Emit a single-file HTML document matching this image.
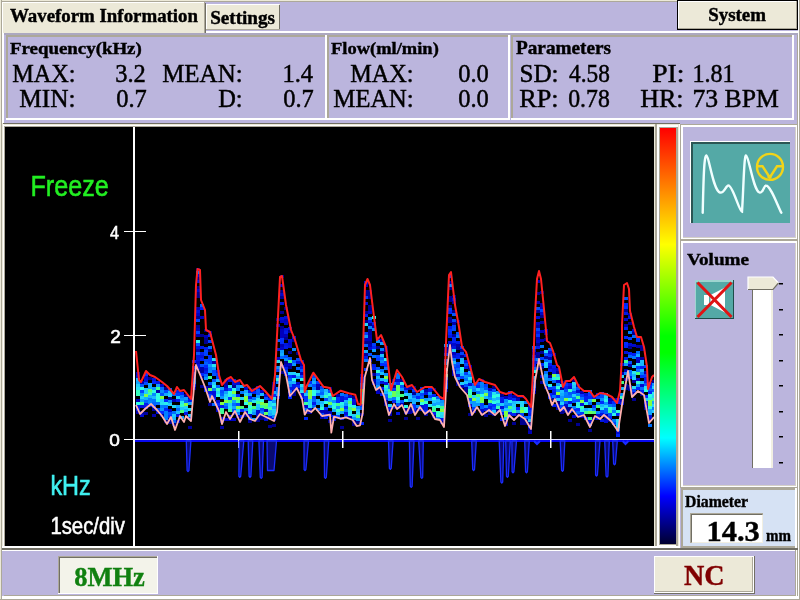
<!DOCTYPE html>
<html><head><meta charset="utf-8"><style>html,body{margin:0;padding:0;width:800px;height:600px;overflow:hidden;background:#BBB5DD}svg{display:block;will-change:transform}</style></head>
<body><svg width="800" height="600" viewBox="0 0 800 600"><rect x="0" y="0" width="800" height="600" fill="#BBB5DD"/><rect x="0" y="0" width="800" height="1" fill="#ECE9D8"/><rect x="0" y="1" width="800" height="1" fill="#ACA899"/><rect x="0" y="0" width="1" height="600" fill="#ECE9D8"/><rect x="1" y="0" width="1" height="600" fill="#ACA899"/><rect x="797" y="31" width="1" height="566" fill="#ACA899"/><rect x="798" y="0" width="1" height="600" fill="#FFFFFF"/><rect x="799" y="0" width="1" height="600" fill="#ACA899"/><rect x="0" y="599" width="800" height="1" fill="#ACA899"/><rect x="2" y="596" width="796" height="3" fill="#FFFFFF"/><rect x="4" y="595" width="793" height="1" fill="#ACA899"/><rect x="2" y="31" width="796" height="2" fill="#FFFFFF"/><rect x="2" y="33" width="796" height="2" fill="#ACA8C0"/><rect x="2" y="31" width="2" height="520" fill="#FFFFFF"/><rect x="2" y="2" width="203" height="31" fill="#ECE9D8"/><rect x="2" y="2" width="203" height="1" fill="#FFFFFF"/><rect x="2" y="2" width="1" height="31" fill="#FFFFFF"/><rect x="204" y="2" width="1" height="31" fill="#ACA899"/><rect x="205" y="3" width="1" height="30" fill="#716F64"/><rect x="206" y="4" width="74" height="26" fill="#ECE9D8"/><rect x="206" y="4" width="73" height="1" fill="#FFFFFF"/><rect x="206" y="4" width="1" height="26" fill="#FFFFFF"/><rect x="279" y="5" width="1" height="25" fill="#716F64"/><rect x="206" y="29" width="74" height="1" fill="#ACA899"/><rect x="677" y="0" width="121" height="30" fill="#000"/><rect x="678" y="1" width="119" height="28" fill="#FFFFFF"/><rect x="679" y="2" width="117" height="26" fill="#ECE9D8"/><rect x="796" y="1" width="1" height="28" fill="#ACA899"/><rect x="678" y="28" width="119" height="1" fill="#ACA899"/><rect x="6" y="35" width="321" height="85" fill="#BBB5DD"/><rect x="6" y="35" width="321" height="2" fill="#ACA899"/><rect x="6" y="35" width="2" height="85" fill="#ACA899"/><rect x="6" y="118" width="321" height="2" fill="#FFFFFF"/><rect x="325" y="35" width="2" height="85" fill="#FFFFFF"/><rect x="327" y="35" width="183" height="85" fill="#BBB5DD"/><rect x="327" y="35" width="183" height="2" fill="#ACA899"/><rect x="327" y="35" width="2" height="85" fill="#ACA899"/><rect x="327" y="118" width="183" height="2" fill="#FFFFFF"/><rect x="508" y="35" width="2" height="85" fill="#FFFFFF"/><rect x="511" y="35" width="283" height="85" fill="#BBB5DD"/><rect x="511" y="35" width="283" height="2" fill="#ACA899"/><rect x="511" y="35" width="2" height="85" fill="#ACA899"/><rect x="511" y="118" width="283" height="2" fill="#FFFFFF"/><rect x="792" y="35" width="2" height="85" fill="#FFFFFF"/><rect x="2" y="123" width="678" height="1" fill="#716F64"/><rect x="2" y="124" width="678" height="1" fill="#ECE9D8"/><rect x="3" y="125" width="677" height="1" fill="#FFFFFF"/><rect x="4" y="126" width="676" height="1" fill="#ACA899"/><rect x="2" y="123" width="1" height="425" fill="#ECE9D8"/><rect x="3" y="124" width="1" height="423" fill="#FFFFFF"/><rect x="4" y="126" width="1" height="420" fill="#ACA899"/><rect x="5" y="127" width="649" height="419" fill="#000"/><rect x="654" y="124" width="1" height="424" fill="#ECE9D8"/><rect x="655" y="124" width="2" height="424" fill="#ACA899"/><rect x="657" y="126" width="21" height="420" fill="#FFFFFF"/><rect x="657" y="126" width="19" height="1" fill="#FFFFFF"/><rect x="659" y="127" width="18" height="418" fill="#ACA899"/><defs><linearGradient id="cb" x1="0" y1="0" x2="0" y2="1"><stop offset="0" stop-color="#FF0000"/><stop offset="0.28" stop-color="#FFFF00"/><stop offset="0.50" stop-color="#00FF00"/><stop offset="0.54" stop-color="#00FF00"/><stop offset="0.745" stop-color="#00FFFF"/><stop offset="0.885" stop-color="#0000FF"/><stop offset="1" stop-color="#000030"/></linearGradient></defs><rect x="660" y="128" width="16" height="416" fill="url(#cb)"/><rect x="676" y="127" width="2" height="419" fill="#ACA899"/><rect x="678" y="124" width="1" height="424" fill="#ECE9D8"/><rect x="679" y="124" width="1" height="424" fill="#FFFFFF"/><rect x="2" y="546" width="678" height="2" fill="#FFFFFF"/><rect x="2" y="548" width="796" height="2" fill="#716F64"/><rect x="680" y="124" width="118" height="116" fill="#ACA899"/><rect x="681" y="125" width="116" height="114" fill="#FFFFFF"/><rect x="683" y="127" width="113" height="111" fill="#D4D0C8"/><rect x="683" y="127" width="112" height="110" fill="#BBB5DD"/><rect x="680" y="240" width="118" height="248" fill="#ACA899"/><rect x="681" y="241" width="116" height="246" fill="#FFFFFF"/><rect x="683" y="243" width="113" height="243" fill="#D4D0C8"/><rect x="683" y="243" width="112" height="242" fill="#BBB5DD"/><rect x="681" y="488" width="116" height="60" fill="#ACA899"/><rect x="683" y="490" width="113" height="56" fill="#D6E2F4"/><rect x="795" y="488" width="2" height="60" fill="#FFFFFF"/><rect x="690" y="141" width="100" height="82" fill="#FFFFFF"/><rect x="691" y="142" width="99" height="81" fill="#2B5654"/><rect x="693" y="144" width="97" height="79" fill="#54A9A6"/><path d="M702.7 212.7 C703.5 180 704 155 706.5 155.5 C709 156 713 190 720 192.5 C724 194 726 185 728.5 185.5 C733 186 739 211 742 211.7 C743.5 190 744 155 746 155.5 C749 156 753 190 759.5 192.5 C763 194 764 185 766 185.5 C771 186 778 207 781.3 212.7" fill="none" stroke="#F0FFFF" stroke-width="2.4" stroke-linecap="round"/><circle cx="770" cy="166.9" r="13" fill="none" stroke="#F2D418" stroke-width="2.4"/><path d="M757.5 166.3 L762.5 166.3 L769.8 177.5 L777 166.3 L783 166.3" fill="none" stroke="#F2D418" stroke-width="2.4"/><rect x="767.5" y="175.5" width="4" height="3" fill="#F2D418"/><rect x="695" y="280" width="39" height="39" fill="#1E4C4A"/><rect x="695" y="280" width="38" height="38" fill="#9ED4D0"/><rect x="696" y="282" width="37" height="36" fill="#54A9A6"/><path d="M704 295 L709 295 L709 305 L704 305 Z M710.5 295 L725 287.5 L725 312.5 L710.5 305 Z" fill="#FFFFFF"/><path d="M697.5 282.5 L731.5 317 M731.5 282.5 L697.5 317" stroke="#E01414" stroke-width="3"/><rect x="752" y="289" width="21" height="179" fill="#FFFFFF"/><rect x="752" y="289" width="1" height="179" fill="#716F64"/><rect x="771" y="289" width="2" height="179" fill="#F1EFE2"/><path d="M748 277 L773 277 L778.5 283 L773 290 L748 290 Z" fill="#ECE9D8"/><path d="M748 290 L748 277 L773 277 L778.5 283" fill="none" stroke="#FFFFFF" stroke-width="1.2"/><path d="M748 289.5 L773 289.5 L778.5 283" fill="none" stroke="#716F64" stroke-width="1.2"/><rect x="779" y="283" width="4" height="1.5" fill="#000"/><rect x="779" y="309" width="4" height="1.5" fill="#000"/><rect x="779" y="334" width="4" height="1.5" fill="#000"/><rect x="779" y="360" width="4" height="1.5" fill="#000"/><rect x="779" y="385" width="4" height="1.5" fill="#000"/><rect x="779" y="411" width="4" height="1.5" fill="#000"/><rect x="779" y="436" width="4" height="1.5" fill="#000"/><rect x="779" y="462" width="4" height="1.5" fill="#000"/><rect x="690" y="513" width="73" height="30" fill="#ACA899"/><rect x="691" y="514" width="71" height="28" fill="#716F64"/><rect x="692" y="515" width="71" height="28" fill="#F1EFE2"/><rect x="692" y="515" width="70" height="27" fill="#FFFFFF"/><rect x="4" y="550" width="792" height="1" fill="#FFFFFF"/><rect x="58" y="556" width="100" height="38" fill="#FFFFFF"/><rect x="58" y="556" width="99" height="37" fill="#ACA899"/><rect x="59" y="557" width="98" height="36" fill="#716F64"/><rect x="60" y="558" width="97" height="35" fill="#F3F3EA"/><rect x="654" y="556" width="101" height="38" fill="#716F64"/><rect x="654" y="556" width="100" height="37" fill="#FFFFFF"/><rect x="655" y="557" width="98" height="35" fill="#ACA899"/><rect x="655" y="557" width="97" height="34" fill="#ECE9D8"/><rect x="795" y="550" width="1" height="46" fill="#ACA899"/><rect x="796" y="550" width="1" height="47" fill="#FFFFFF"/><rect x="133" y="127" width="2" height="419" fill="#FFFFFF"/><rect x="124" y="231" width="22" height="1" fill="#FFFFFF"/><rect x="124" y="335" width="22" height="1" fill="#FFFFFF"/><rect x="124" y="439" width="22" height="1" fill="#FFFFFF"/><defs><clipPath id="gc"><rect x="135" y="127" width="519" height="419"/></clipPath></defs><g clip-path="url(#gc)"><g shape-rendering="crispEdges"><rect x="136" y="372" width="4" height="3" fill="#0005C7"/><rect x="136" y="375" width="4" height="3" fill="#0012DB"/><rect x="136" y="378" width="4" height="3" fill="#18B6FF"/><rect x="136" y="381" width="4" height="3" fill="#0EA0FF"/><rect x="136" y="384" width="4" height="3" fill="#21CCFC"/><rect x="136" y="387" width="4" height="3" fill="#26DFF4"/><rect x="136" y="390" width="4" height="3" fill="#36FFBE"/><rect x="136" y="393" width="4" height="3" fill="#36FFB9"/><rect x="136" y="399" width="4" height="3" fill="#0000B7"/><rect x="136" y="402" width="4" height="3" fill="#30FFE5"/><rect x="136" y="405" width="4" height="3" fill="#0016E3"/><rect x="136" y="408" width="4" height="3" fill="#001BEB"/><rect x="136" y="411" width="4" height="3" fill="#0000A4"/><rect x="140" y="381" width="4" height="3" fill="#0000B3"/><rect x="140" y="384" width="4" height="3" fill="#0059FF"/><rect x="140" y="387" width="4" height="3" fill="#30FFE3"/><rect x="140" y="390" width="4" height="3" fill="#0048FF"/><rect x="140" y="393" width="4" height="3" fill="#0B99FF"/><rect x="140" y="396" width="4" height="3" fill="#22D0FB"/><rect x="140" y="399" width="4" height="3" fill="#0D9EFF"/><rect x="140" y="402" width="4" height="3" fill="#3BFF9B"/><rect x="140" y="405" width="4" height="3" fill="#0012DB"/><rect x="140" y="411" width="4" height="3" fill="#000090"/><rect x="140" y="414" width="4" height="3" fill="#000ACE"/><rect x="144" y="373" width="4" height="3" fill="#0032FF"/><rect x="144" y="376" width="4" height="3" fill="#0009CD"/><rect x="144" y="379" width="4" height="3" fill="#000FD6"/><rect x="144" y="382" width="4" height="3" fill="#004DFF"/><rect x="144" y="388" width="4" height="3" fill="#20CAFE"/><rect x="144" y="391" width="4" height="3" fill="#21CCFD"/><rect x="144" y="394" width="4" height="3" fill="#80FF45"/><rect x="144" y="397" width="4" height="3" fill="#15B0FF"/><rect x="144" y="400" width="4" height="3" fill="#0069FF"/><rect x="144" y="403" width="4" height="3" fill="#001DED"/><rect x="144" y="406" width="4" height="3" fill="#0013DD"/><rect x="144" y="412" width="4" height="3" fill="#0000A2"/><rect x="148" y="377" width="4" height="3" fill="#000090"/><rect x="148" y="383" width="4" height="3" fill="#11A8FF"/><rect x="148" y="386" width="4" height="3" fill="#11A7FF"/><rect x="148" y="389" width="4" height="3" fill="#55FF6C"/><rect x="148" y="392" width="4" height="3" fill="#38FFB0"/><rect x="148" y="395" width="4" height="3" fill="#17B5FF"/><rect x="148" y="398" width="4" height="3" fill="#0080FF"/><rect x="148" y="401" width="4" height="3" fill="#0387FF"/><rect x="148" y="404" width="4" height="3" fill="#0013DD"/><rect x="152" y="378" width="4" height="3" fill="#0015E0"/><rect x="152" y="381" width="4" height="3" fill="#0025FB"/><rect x="152" y="387" width="4" height="3" fill="#0994FF"/><rect x="152" y="390" width="4" height="3" fill="#2DF7E9"/><rect x="152" y="393" width="4" height="3" fill="#048AFF"/><rect x="152" y="396" width="4" height="3" fill="#1BBEFF"/><rect x="152" y="399" width="4" height="3" fill="#0078FF"/><rect x="152" y="402" width="4" height="3" fill="#0065FF"/><rect x="152" y="405" width="4" height="3" fill="#002BFF"/><rect x="152" y="408" width="4" height="3" fill="#0000A5"/><rect x="152" y="414" width="4" height="3" fill="#0000AD"/><rect x="156" y="381" width="4" height="3" fill="#0016E2"/><rect x="156" y="384" width="4" height="3" fill="#0C9CFF"/><rect x="156" y="387" width="4" height="3" fill="#3EFF8A"/><rect x="156" y="390" width="4" height="3" fill="#0000A9"/><rect x="156" y="393" width="4" height="3" fill="#2FFEE6"/><rect x="156" y="396" width="4" height="3" fill="#2FFEE6"/><rect x="156" y="399" width="4" height="3" fill="#2EF8E9"/><rect x="156" y="402" width="4" height="3" fill="#0073FF"/><rect x="156" y="408" width="4" height="3" fill="#0046FF"/><rect x="156" y="411" width="4" height="3" fill="#0011DA"/><rect x="160" y="384" width="4" height="3" fill="#0006C8"/><rect x="160" y="387" width="4" height="3" fill="#006CFF"/><rect x="160" y="390" width="4" height="3" fill="#058BFF"/><rect x="160" y="393" width="4" height="3" fill="#0051FF"/><rect x="160" y="396" width="4" height="3" fill="#80FF45"/><rect x="160" y="399" width="4" height="3" fill="#23D4F9"/><rect x="160" y="402" width="4" height="3" fill="#27E2F3"/><rect x="160" y="405" width="4" height="3" fill="#007CFF"/><rect x="160" y="408" width="4" height="3" fill="#0A97FF"/><rect x="160" y="411" width="4" height="3" fill="#002AFF"/><rect x="160" y="414" width="4" height="3" fill="#000090"/><rect x="164" y="387" width="4" height="3" fill="#000090"/><rect x="164" y="390" width="4" height="3" fill="#0047FF"/><rect x="164" y="393" width="4" height="3" fill="#12A9FF"/><rect x="164" y="399" width="4" height="3" fill="#002AFF"/><rect x="164" y="402" width="4" height="3" fill="#2AEDED"/><rect x="164" y="405" width="4" height="3" fill="#0073FF"/><rect x="164" y="408" width="4" height="3" fill="#0025FB"/><rect x="164" y="411" width="4" height="3" fill="#007DFF"/><rect x="164" y="414" width="4" height="3" fill="#0183FF"/><rect x="164" y="417" width="4" height="3" fill="#0081FF"/><rect x="164" y="420" width="4" height="3" fill="#000090"/><rect x="168" y="388" width="4" height="3" fill="#0057FF"/><rect x="168" y="391" width="4" height="3" fill="#1BBEFF"/><rect x="168" y="394" width="4" height="3" fill="#22D0FB"/><rect x="168" y="397" width="4" height="3" fill="#000090"/><rect x="168" y="400" width="4" height="3" fill="#068EFF"/><rect x="168" y="403" width="4" height="3" fill="#22D1FA"/><rect x="168" y="409" width="4" height="3" fill="#0006C8"/><rect x="168" y="412" width="4" height="3" fill="#004AFF"/><rect x="168" y="415" width="4" height="3" fill="#002DFF"/><rect x="168" y="418" width="4" height="3" fill="#000090"/><rect x="168" y="421" width="4" height="3" fill="#000096"/><rect x="172" y="393" width="4" height="3" fill="#0062FF"/><rect x="172" y="399" width="4" height="3" fill="#0000B8"/><rect x="172" y="405" width="4" height="3" fill="#24D6F8"/><rect x="172" y="411" width="4" height="3" fill="#0070FF"/><rect x="172" y="414" width="4" height="3" fill="#20CAFD"/><rect x="172" y="417" width="4" height="3" fill="#18B6FF"/><rect x="172" y="420" width="4" height="3" fill="#0069FF"/><rect x="172" y="423" width="4" height="3" fill="#000090"/><rect x="176" y="390" width="4" height="3" fill="#0022F6"/><rect x="176" y="393" width="4" height="3" fill="#003CFF"/><rect x="176" y="396" width="4" height="3" fill="#20CAFD"/><rect x="176" y="399" width="4" height="3" fill="#001BE9"/><rect x="176" y="405" width="4" height="3" fill="#11A7FF"/><rect x="176" y="408" width="4" height="3" fill="#006DFF"/><rect x="176" y="411" width="4" height="3" fill="#1BBDFF"/><rect x="176" y="414" width="4" height="3" fill="#0018E5"/><rect x="176" y="420" width="4" height="3" fill="#0000B5"/><rect x="180" y="392" width="4" height="3" fill="#0028FF"/><rect x="180" y="395" width="4" height="3" fill="#0076FF"/><rect x="180" y="398" width="4" height="3" fill="#0893FF"/><rect x="180" y="401" width="4" height="3" fill="#2AEAEF"/><rect x="180" y="404" width="4" height="3" fill="#34FFC9"/><rect x="180" y="407" width="4" height="3" fill="#1EC5FF"/><rect x="180" y="410" width="4" height="3" fill="#3FFF83"/><rect x="180" y="416" width="4" height="3" fill="#0EA0FF"/><rect x="184" y="394" width="4" height="3" fill="#0000A2"/><rect x="184" y="397" width="4" height="3" fill="#0D9DFF"/><rect x="184" y="400" width="4" height="3" fill="#006FFF"/><rect x="184" y="403" width="4" height="3" fill="#80FF45"/><rect x="184" y="406" width="4" height="3" fill="#23D4F9"/><rect x="184" y="409" width="4" height="3" fill="#13ACFF"/><rect x="184" y="412" width="4" height="3" fill="#0019E7"/><rect x="188" y="396" width="4" height="3" fill="#0003C4"/><rect x="188" y="399" width="4" height="3" fill="#001CEC"/><rect x="188" y="402" width="4" height="3" fill="#10A4FF"/><rect x="188" y="408" width="4" height="3" fill="#27E0F3"/><rect x="188" y="414" width="4" height="3" fill="#1EC3FF"/><rect x="188" y="417" width="4" height="3" fill="#0025FA"/><rect x="188" y="426" width="4" height="3" fill="#00009E"/><rect x="192" y="360" width="4" height="3" fill="#0025FA"/><rect x="192" y="366" width="4" height="3" fill="#003AFF"/><rect x="192" y="369" width="4" height="3" fill="#00009E"/><rect x="192" y="372" width="4" height="3" fill="#0049FF"/><rect x="192" y="375" width="4" height="3" fill="#0053FF"/><rect x="192" y="378" width="4" height="3" fill="#0076FF"/><rect x="192" y="381" width="4" height="3" fill="#0489FF"/><rect x="192" y="384" width="4" height="3" fill="#001DED"/><rect x="192" y="387" width="4" height="3" fill="#000094"/><rect x="196" y="268" width="4" height="3" fill="#000090"/><rect x="196" y="271" width="4" height="3" fill="#007CFF"/><rect x="196" y="274" width="4" height="3" fill="#000BD0"/><rect x="196" y="277" width="4" height="3" fill="#000090"/><rect x="196" y="280" width="4" height="3" fill="#0014DF"/><rect x="196" y="286" width="4" height="3" fill="#000090"/><rect x="196" y="289" width="4" height="3" fill="#0007CA"/><rect x="196" y="292" width="4" height="3" fill="#000090"/><rect x="196" y="295" width="4" height="3" fill="#000090"/><rect x="196" y="307" width="4" height="3" fill="#0000B8"/><rect x="196" y="310" width="4" height="3" fill="#0010D9"/><rect x="196" y="313" width="4" height="3" fill="#0003C3"/><rect x="196" y="316" width="4" height="3" fill="#000090"/><rect x="196" y="319" width="4" height="3" fill="#0045FF"/><rect x="196" y="325" width="4" height="3" fill="#000090"/><rect x="196" y="328" width="4" height="3" fill="#0000B0"/><rect x="196" y="331" width="4" height="3" fill="#0042FF"/><rect x="196" y="334" width="4" height="3" fill="#0000B8"/><rect x="196" y="340" width="4" height="3" fill="#2CF3EB"/><rect x="196" y="343" width="4" height="3" fill="#0051FF"/><rect x="196" y="346" width="4" height="3" fill="#000FD7"/><rect x="196" y="349" width="4" height="3" fill="#0000AA"/><rect x="196" y="352" width="4" height="3" fill="#0053FF"/><rect x="196" y="355" width="4" height="3" fill="#0012DC"/><rect x="196" y="358" width="4" height="3" fill="#0014DE"/><rect x="196" y="361" width="4" height="3" fill="#0006C7"/><rect x="196" y="364" width="4" height="3" fill="#0012DC"/><rect x="196" y="367" width="4" height="3" fill="#000CD2"/><rect x="200" y="304" width="4" height="3" fill="#005DFF"/><rect x="200" y="307" width="4" height="3" fill="#001DED"/><rect x="200" y="316" width="4" height="3" fill="#0002C2"/><rect x="200" y="334" width="4" height="3" fill="#000090"/><rect x="200" y="346" width="4" height="3" fill="#0017E4"/><rect x="200" y="352" width="4" height="3" fill="#001FF1"/><rect x="200" y="355" width="4" height="3" fill="#0010D9"/><rect x="200" y="358" width="4" height="3" fill="#0021F4"/><rect x="200" y="364" width="4" height="3" fill="#0053FF"/><rect x="200" y="367" width="4" height="3" fill="#0000AD"/><rect x="200" y="370" width="4" height="3" fill="#00009D"/><rect x="200" y="373" width="4" height="3" fill="#0027FE"/><rect x="200" y="376" width="4" height="3" fill="#000090"/><rect x="200" y="385" width="4" height="3" fill="#000090"/><rect x="204" y="329" width="4" height="3" fill="#000090"/><rect x="204" y="335" width="4" height="3" fill="#0000BA"/><rect x="204" y="338" width="4" height="3" fill="#000090"/><rect x="204" y="341" width="4" height="3" fill="#000090"/><rect x="204" y="347" width="4" height="3" fill="#001FF1"/><rect x="204" y="350" width="4" height="3" fill="#0046FF"/><rect x="204" y="353" width="4" height="3" fill="#0042FF"/><rect x="204" y="359" width="4" height="3" fill="#0041FF"/><rect x="204" y="362" width="4" height="3" fill="#005DFF"/><rect x="204" y="365" width="4" height="3" fill="#0028FF"/><rect x="204" y="368" width="4" height="3" fill="#0011D9"/><rect x="204" y="371" width="4" height="3" fill="#001BEA"/><rect x="204" y="374" width="4" height="3" fill="#0066FF"/><rect x="204" y="377" width="4" height="3" fill="#0892FF"/><rect x="204" y="386" width="4" height="3" fill="#0000BA"/><rect x="204" y="389" width="4" height="3" fill="#0016E2"/><rect x="208" y="331" width="4" height="3" fill="#000090"/><rect x="208" y="334" width="4" height="3" fill="#0025FB"/><rect x="208" y="340" width="4" height="3" fill="#003DFF"/><rect x="208" y="346" width="4" height="3" fill="#006CFF"/><rect x="208" y="349" width="4" height="3" fill="#000099"/><rect x="208" y="355" width="4" height="3" fill="#002CFF"/><rect x="208" y="358" width="4" height="3" fill="#003AFF"/><rect x="208" y="361" width="4" height="3" fill="#003CFF"/><rect x="208" y="364" width="4" height="3" fill="#0C9CFF"/><rect x="208" y="367" width="4" height="3" fill="#007EFF"/><rect x="208" y="370" width="4" height="3" fill="#0489FF"/><rect x="208" y="376" width="4" height="3" fill="#3DFF8D"/><rect x="208" y="382" width="4" height="3" fill="#0056FF"/><rect x="208" y="385" width="4" height="3" fill="#000090"/><rect x="208" y="388" width="4" height="3" fill="#71FF52"/><rect x="208" y="391" width="4" height="3" fill="#0016E1"/><rect x="208" y="394" width="4" height="3" fill="#0041FF"/><rect x="208" y="397" width="4" height="3" fill="#0024F9"/><rect x="208" y="403" width="4" height="3" fill="#000090"/><rect x="212" y="358" width="4" height="3" fill="#26DFF4"/><rect x="212" y="361" width="4" height="3" fill="#0000A7"/><rect x="212" y="364" width="4" height="3" fill="#27E2F2"/><rect x="212" y="367" width="4" height="3" fill="#0996FF"/><rect x="212" y="370" width="4" height="3" fill="#0048FF"/><rect x="212" y="373" width="4" height="3" fill="#0053FF"/><rect x="212" y="379" width="4" height="3" fill="#005CFF"/><rect x="212" y="382" width="4" height="3" fill="#20CAFD"/><rect x="212" y="385" width="4" height="3" fill="#2CF4EA"/><rect x="212" y="388" width="4" height="3" fill="#007DFF"/><rect x="212" y="391" width="4" height="3" fill="#0011DA"/><rect x="212" y="394" width="4" height="3" fill="#0013DD"/><rect x="212" y="397" width="4" height="3" fill="#0025FA"/><rect x="212" y="403" width="4" height="3" fill="#0064FF"/><rect x="216" y="370" width="4" height="3" fill="#0015E0"/><rect x="216" y="373" width="4" height="3" fill="#0038FF"/><rect x="216" y="376" width="4" height="3" fill="#003EFF"/><rect x="216" y="379" width="4" height="3" fill="#19B8FF"/><rect x="216" y="385" width="4" height="3" fill="#0065FF"/><rect x="216" y="388" width="4" height="3" fill="#35FFC2"/><rect x="216" y="391" width="4" height="3" fill="#24D7F8"/><rect x="216" y="394" width="4" height="3" fill="#2EF9E8"/><rect x="216" y="400" width="4" height="3" fill="#000BD0"/><rect x="216" y="403" width="4" height="3" fill="#0027FE"/><rect x="216" y="406" width="4" height="3" fill="#0008CC"/><rect x="216" y="409" width="4" height="3" fill="#0006C9"/><rect x="220" y="387" width="4" height="3" fill="#0D9DFF"/><rect x="220" y="390" width="4" height="3" fill="#0050FF"/><rect x="220" y="393" width="4" height="3" fill="#0061FF"/><rect x="220" y="396" width="4" height="3" fill="#0892FF"/><rect x="220" y="402" width="4" height="3" fill="#80FF45"/><rect x="220" y="405" width="4" height="3" fill="#001DED"/><rect x="220" y="408" width="4" height="3" fill="#3BFF9B"/><rect x="220" y="411" width="4" height="3" fill="#3CFF93"/><rect x="220" y="417" width="4" height="3" fill="#000BD0"/><rect x="220" y="420" width="4" height="3" fill="#000090"/><rect x="220" y="426" width="4" height="3" fill="#00009B"/><rect x="224" y="379" width="4" height="3" fill="#000091"/><rect x="224" y="382" width="4" height="3" fill="#00009A"/><rect x="224" y="385" width="4" height="3" fill="#0000BB"/><rect x="224" y="388" width="4" height="3" fill="#0014DE"/><rect x="224" y="391" width="4" height="3" fill="#0FA2FF"/><rect x="224" y="394" width="4" height="3" fill="#21CEFC"/><rect x="224" y="397" width="4" height="3" fill="#27E0F3"/><rect x="224" y="400" width="4" height="3" fill="#80FF45"/><rect x="224" y="403" width="4" height="3" fill="#0080FF"/><rect x="224" y="406" width="4" height="3" fill="#0055FF"/><rect x="224" y="418" width="4" height="3" fill="#0006C9"/><rect x="228" y="379" width="4" height="3" fill="#000CD3"/><rect x="228" y="385" width="4" height="3" fill="#27E0F3"/><rect x="228" y="388" width="4" height="3" fill="#0045FF"/><rect x="228" y="391" width="4" height="3" fill="#30FFE4"/><rect x="228" y="394" width="4" height="3" fill="#2DF7E9"/><rect x="228" y="397" width="4" height="3" fill="#003EFF"/><rect x="228" y="400" width="4" height="3" fill="#43FF7C"/><rect x="228" y="403" width="4" height="3" fill="#23D3F9"/><rect x="228" y="406" width="4" height="3" fill="#27E0F3"/><rect x="228" y="409" width="4" height="3" fill="#3DFF91"/><rect x="228" y="415" width="4" height="3" fill="#0022F5"/><rect x="228" y="418" width="4" height="3" fill="#0002C2"/><rect x="232" y="379" width="4" height="3" fill="#001CEB"/><rect x="232" y="382" width="4" height="3" fill="#000FD7"/><rect x="232" y="385" width="4" height="3" fill="#000090"/><rect x="232" y="388" width="4" height="3" fill="#2EF9E8"/><rect x="232" y="391" width="4" height="3" fill="#80FF45"/><rect x="232" y="394" width="4" height="3" fill="#22D0FA"/><rect x="232" y="397" width="4" height="3" fill="#80FF45"/><rect x="232" y="400" width="4" height="3" fill="#0FA2FF"/><rect x="232" y="403" width="4" height="3" fill="#006CFF"/><rect x="232" y="406" width="4" height="3" fill="#11A6FF"/><rect x="232" y="409" width="4" height="3" fill="#0057FF"/><rect x="232" y="412" width="4" height="3" fill="#000091"/><rect x="232" y="418" width="4" height="3" fill="#0003C3"/><rect x="236" y="382" width="4" height="3" fill="#000ACE"/><rect x="236" y="385" width="4" height="3" fill="#0893FF"/><rect x="236" y="388" width="4" height="3" fill="#0081FF"/><rect x="236" y="394" width="4" height="3" fill="#0029FF"/><rect x="236" y="397" width="4" height="3" fill="#80FF45"/><rect x="236" y="400" width="4" height="3" fill="#3AFFA1"/><rect x="236" y="403" width="4" height="3" fill="#0042FF"/><rect x="236" y="406" width="4" height="3" fill="#80FF45"/><rect x="236" y="409" width="4" height="3" fill="#24D7F7"/><rect x="236" y="412" width="4" height="3" fill="#007CFF"/><rect x="236" y="415" width="4" height="3" fill="#0000AA"/><rect x="240" y="385" width="4" height="3" fill="#15AFFF"/><rect x="240" y="391" width="4" height="3" fill="#007AFF"/><rect x="240" y="397" width="4" height="3" fill="#24D8F7"/><rect x="240" y="406" width="4" height="3" fill="#47FF79"/><rect x="240" y="409" width="4" height="3" fill="#0026FC"/><rect x="240" y="415" width="4" height="3" fill="#0025FA"/><rect x="244" y="387" width="4" height="3" fill="#000ACE"/><rect x="244" y="390" width="4" height="3" fill="#13ACFF"/><rect x="244" y="393" width="4" height="3" fill="#21CEFC"/><rect x="244" y="396" width="4" height="3" fill="#80FF45"/><rect x="244" y="399" width="4" height="3" fill="#80FF45"/><rect x="244" y="402" width="4" height="3" fill="#2FFCE7"/><rect x="244" y="408" width="4" height="3" fill="#0D9DFF"/><rect x="244" y="411" width="4" height="3" fill="#000ACE"/><rect x="244" y="414" width="4" height="3" fill="#000090"/><rect x="248" y="390" width="4" height="3" fill="#0018E5"/><rect x="248" y="393" width="4" height="3" fill="#0B9AFF"/><rect x="248" y="396" width="4" height="3" fill="#0018E6"/><rect x="248" y="399" width="4" height="3" fill="#0995FF"/><rect x="248" y="402" width="4" height="3" fill="#72FF51"/><rect x="248" y="405" width="4" height="3" fill="#2FFEE6"/><rect x="248" y="408" width="4" height="3" fill="#37FFB6"/><rect x="248" y="411" width="4" height="3" fill="#2CF4EA"/><rect x="248" y="414" width="4" height="3" fill="#0007C9"/><rect x="248" y="417" width="4" height="3" fill="#0057FF"/><rect x="248" y="420" width="4" height="3" fill="#000090"/><rect x="252" y="388" width="4" height="3" fill="#000090"/><rect x="252" y="391" width="4" height="3" fill="#0022F6"/><rect x="252" y="397" width="4" height="3" fill="#006FFF"/><rect x="252" y="400" width="4" height="3" fill="#27E3F2"/><rect x="252" y="406" width="4" height="3" fill="#47FF78"/><rect x="252" y="409" width="4" height="3" fill="#17B3FF"/><rect x="252" y="412" width="4" height="3" fill="#0A96FF"/><rect x="252" y="418" width="4" height="3" fill="#0D9DFF"/><rect x="256" y="386" width="4" height="3" fill="#000FD6"/><rect x="256" y="389" width="4" height="3" fill="#0056FF"/><rect x="256" y="392" width="4" height="3" fill="#0052FF"/><rect x="256" y="395" width="4" height="3" fill="#0D9EFF"/><rect x="256" y="398" width="4" height="3" fill="#28E3F2"/><rect x="256" y="401" width="4" height="3" fill="#3CFF93"/><rect x="256" y="404" width="4" height="3" fill="#1FC7FF"/><rect x="256" y="407" width="4" height="3" fill="#1ABBFF"/><rect x="256" y="410" width="4" height="3" fill="#000CD2"/><rect x="256" y="413" width="4" height="3" fill="#000ACE"/><rect x="256" y="416" width="4" height="3" fill="#000090"/><rect x="256" y="419" width="4" height="3" fill="#000090"/><rect x="260" y="390" width="4" height="3" fill="#0005C6"/><rect x="260" y="393" width="4" height="3" fill="#17B5FF"/><rect x="260" y="399" width="4" height="3" fill="#31FFDA"/><rect x="260" y="402" width="4" height="3" fill="#80FF45"/><rect x="260" y="405" width="4" height="3" fill="#3BFF9B"/><rect x="260" y="408" width="4" height="3" fill="#004AFF"/><rect x="260" y="411" width="4" height="3" fill="#0073FF"/><rect x="260" y="414" width="4" height="3" fill="#000090"/><rect x="260" y="417" width="4" height="3" fill="#000090"/><rect x="264" y="394" width="4" height="3" fill="#000ED5"/><rect x="264" y="397" width="4" height="3" fill="#0050FF"/><rect x="264" y="403" width="4" height="3" fill="#6BFF58"/><rect x="264" y="406" width="4" height="3" fill="#48FF77"/><rect x="264" y="409" width="4" height="3" fill="#0000B3"/><rect x="264" y="412" width="4" height="3" fill="#63FF5F"/><rect x="264" y="415" width="4" height="3" fill="#000090"/><rect x="264" y="418" width="4" height="3" fill="#000CD2"/><rect x="268" y="395" width="4" height="3" fill="#0000A4"/><rect x="268" y="398" width="4" height="3" fill="#0026FD"/><rect x="268" y="401" width="4" height="3" fill="#23D4F9"/><rect x="268" y="404" width="4" height="3" fill="#24D6F8"/><rect x="268" y="407" width="4" height="3" fill="#39FFAA"/><rect x="268" y="410" width="4" height="3" fill="#19BAFF"/><rect x="268" y="413" width="4" height="3" fill="#13ACFF"/><rect x="268" y="416" width="4" height="3" fill="#0022F6"/><rect x="268" y="425" width="4" height="3" fill="#000090"/><rect x="272" y="382" width="4" height="3" fill="#000090"/><rect x="272" y="385" width="4" height="3" fill="#0000AC"/><rect x="272" y="388" width="4" height="3" fill="#0000B3"/><rect x="272" y="391" width="4" height="3" fill="#12A9FF"/><rect x="272" y="394" width="4" height="3" fill="#002DFF"/><rect x="272" y="397" width="4" height="3" fill="#27E2F3"/><rect x="272" y="400" width="4" height="3" fill="#0791FF"/><rect x="272" y="403" width="4" height="3" fill="#2AECEE"/><rect x="272" y="406" width="4" height="3" fill="#12A8FF"/><rect x="272" y="409" width="4" height="3" fill="#23D2FA"/><rect x="272" y="412" width="4" height="3" fill="#22CFFB"/><rect x="272" y="415" width="4" height="3" fill="#0387FF"/><rect x="272" y="418" width="4" height="3" fill="#0002C2"/><rect x="272" y="424" width="4" height="3" fill="#000090"/><rect x="276" y="318" width="4" height="3" fill="#000090"/><rect x="276" y="324" width="4" height="3" fill="#0003C4"/><rect x="276" y="339" width="4" height="3" fill="#005DFF"/><rect x="276" y="348" width="4" height="3" fill="#0018E5"/><rect x="276" y="357" width="4" height="3" fill="#0009CE"/><rect x="276" y="360" width="4" height="3" fill="#27E2F2"/><rect x="276" y="366" width="4" height="3" fill="#0791FF"/><rect x="276" y="369" width="4" height="3" fill="#004FFF"/><rect x="276" y="375" width="4" height="3" fill="#007FFF"/><rect x="276" y="378" width="4" height="3" fill="#2DF6EA"/><rect x="276" y="381" width="4" height="3" fill="#058CFF"/><rect x="276" y="387" width="4" height="3" fill="#007AFF"/><rect x="276" y="390" width="4" height="3" fill="#007AFF"/><rect x="276" y="393" width="4" height="3" fill="#0D9DFF"/><rect x="276" y="396" width="4" height="3" fill="#0000A0"/><rect x="280" y="275" width="4" height="3" fill="#000090"/><rect x="280" y="284" width="4" height="3" fill="#000ED6"/><rect x="280" y="290" width="4" height="3" fill="#000090"/><rect x="280" y="293" width="4" height="3" fill="#0009CC"/><rect x="280" y="296" width="4" height="3" fill="#000090"/><rect x="280" y="302" width="4" height="3" fill="#0012DC"/><rect x="280" y="311" width="4" height="3" fill="#000091"/><rect x="280" y="317" width="4" height="3" fill="#0010D8"/><rect x="280" y="320" width="4" height="3" fill="#0005C6"/><rect x="280" y="326" width="4" height="3" fill="#000090"/><rect x="280" y="329" width="4" height="3" fill="#0000BA"/><rect x="280" y="332" width="4" height="3" fill="#0000BD"/><rect x="280" y="335" width="4" height="3" fill="#0000BE"/><rect x="280" y="338" width="4" height="3" fill="#0033FF"/><rect x="280" y="341" width="4" height="3" fill="#002DFF"/><rect x="280" y="344" width="4" height="3" fill="#0000B6"/><rect x="280" y="347" width="4" height="3" fill="#0006C7"/><rect x="280" y="350" width="4" height="3" fill="#0C9CFF"/><rect x="280" y="353" width="4" height="3" fill="#13ACFF"/><rect x="280" y="356" width="4" height="3" fill="#0067FF"/><rect x="280" y="365" width="4" height="3" fill="#0009CD"/><rect x="280" y="371" width="4" height="3" fill="#000090"/><rect x="284" y="307" width="4" height="3" fill="#000090"/><rect x="284" y="316" width="4" height="3" fill="#000FD7"/><rect x="284" y="319" width="4" height="3" fill="#0000B9"/><rect x="284" y="322" width="4" height="3" fill="#0006C7"/><rect x="284" y="328" width="4" height="3" fill="#0013DE"/><rect x="284" y="331" width="4" height="3" fill="#001AE9"/><rect x="284" y="334" width="4" height="3" fill="#0000B9"/><rect x="284" y="337" width="4" height="3" fill="#000090"/><rect x="284" y="343" width="4" height="3" fill="#0016E1"/><rect x="284" y="346" width="4" height="3" fill="#001AE9"/><rect x="284" y="355" width="4" height="3" fill="#004DFF"/><rect x="284" y="358" width="4" height="3" fill="#058CFF"/><rect x="284" y="361" width="4" height="3" fill="#000098"/><rect x="284" y="364" width="4" height="3" fill="#0002C1"/><rect x="284" y="367" width="4" height="3" fill="#0020F2"/><rect x="284" y="370" width="4" height="3" fill="#0044FF"/><rect x="284" y="373" width="4" height="3" fill="#000FD6"/><rect x="288" y="327" width="4" height="3" fill="#0011DA"/><rect x="288" y="330" width="4" height="3" fill="#000090"/><rect x="288" y="339" width="4" height="3" fill="#000FD7"/><rect x="288" y="342" width="4" height="3" fill="#0009CD"/><rect x="288" y="345" width="4" height="3" fill="#0010D8"/><rect x="288" y="351" width="4" height="3" fill="#000090"/><rect x="288" y="357" width="4" height="3" fill="#0052FF"/><rect x="288" y="360" width="4" height="3" fill="#3DFF8F"/><rect x="288" y="363" width="4" height="3" fill="#0006C8"/><rect x="288" y="366" width="4" height="3" fill="#000090"/><rect x="288" y="372" width="4" height="3" fill="#22CFFB"/><rect x="288" y="375" width="4" height="3" fill="#002FFF"/><rect x="288" y="378" width="4" height="3" fill="#0062FF"/><rect x="288" y="381" width="4" height="3" fill="#12A9FF"/><rect x="288" y="384" width="4" height="3" fill="#007CFF"/><rect x="288" y="387" width="4" height="3" fill="#001AE9"/><rect x="288" y="390" width="4" height="3" fill="#0057FF"/><rect x="288" y="393" width="4" height="3" fill="#0000B0"/><rect x="288" y="396" width="4" height="3" fill="#0026FB"/><rect x="292" y="336" width="4" height="3" fill="#0015E1"/><rect x="292" y="339" width="4" height="3" fill="#000090"/><rect x="292" y="348" width="4" height="3" fill="#0387FF"/><rect x="292" y="360" width="4" height="3" fill="#005BFF"/><rect x="292" y="363" width="4" height="3" fill="#0995FF"/><rect x="292" y="372" width="4" height="3" fill="#22D0FB"/><rect x="292" y="375" width="4" height="3" fill="#0019E6"/><rect x="292" y="378" width="4" height="3" fill="#2EFAE7"/><rect x="292" y="381" width="4" height="3" fill="#17B4FF"/><rect x="292" y="384" width="4" height="3" fill="#001DEE"/><rect x="292" y="387" width="4" height="3" fill="#0016E2"/><rect x="292" y="390" width="4" height="3" fill="#000090"/><rect x="292" y="393" width="4" height="3" fill="#000090"/><rect x="296" y="352" width="4" height="3" fill="#000090"/><rect x="296" y="358" width="4" height="3" fill="#004AFF"/><rect x="296" y="361" width="4" height="3" fill="#000DD4"/><rect x="296" y="367" width="4" height="3" fill="#005EFF"/><rect x="296" y="373" width="4" height="3" fill="#27E0F3"/><rect x="296" y="376" width="4" height="3" fill="#0EA1FF"/><rect x="296" y="382" width="4" height="3" fill="#000BD1"/><rect x="296" y="385" width="4" height="3" fill="#0027FD"/><rect x="296" y="388" width="4" height="3" fill="#000090"/><rect x="300" y="360" width="4" height="3" fill="#0006C8"/><rect x="300" y="363" width="4" height="3" fill="#0000AF"/><rect x="300" y="366" width="4" height="3" fill="#0019E8"/><rect x="300" y="369" width="4" height="3" fill="#0053FF"/><rect x="300" y="372" width="4" height="3" fill="#0000B6"/><rect x="300" y="375" width="4" height="3" fill="#0042FF"/><rect x="300" y="378" width="4" height="3" fill="#2DF6E9"/><rect x="300" y="384" width="4" height="3" fill="#26E0F4"/><rect x="300" y="387" width="4" height="3" fill="#14ADFF"/><rect x="300" y="390" width="4" height="3" fill="#27E2F3"/><rect x="300" y="393" width="4" height="3" fill="#000ED5"/><rect x="300" y="396" width="4" height="3" fill="#0011DA"/><rect x="304" y="390" width="4" height="3" fill="#058BFF"/><rect x="304" y="393" width="4" height="3" fill="#1CBFFF"/><rect x="304" y="396" width="4" height="3" fill="#0033FF"/><rect x="304" y="399" width="4" height="3" fill="#003BFF"/><rect x="304" y="402" width="4" height="3" fill="#3AFFA3"/><rect x="304" y="405" width="4" height="3" fill="#0007CA"/><rect x="304" y="408" width="4" height="3" fill="#006AFF"/><rect x="304" y="411" width="4" height="3" fill="#000090"/><rect x="304" y="417" width="4" height="3" fill="#0025FB"/><rect x="308" y="381" width="4" height="3" fill="#002DFF"/><rect x="308" y="384" width="4" height="3" fill="#0388FF"/><rect x="308" y="390" width="4" height="3" fill="#80FF45"/><rect x="308" y="393" width="4" height="3" fill="#80FF45"/><rect x="308" y="396" width="4" height="3" fill="#80FF45"/><rect x="308" y="399" width="4" height="3" fill="#21CEFB"/><rect x="308" y="402" width="4" height="3" fill="#25DBF6"/><rect x="308" y="405" width="4" height="3" fill="#27E0F3"/><rect x="308" y="408" width="4" height="3" fill="#000CD3"/><rect x="308" y="411" width="4" height="3" fill="#00009D"/><rect x="312" y="375" width="4" height="3" fill="#0047FF"/><rect x="312" y="378" width="4" height="3" fill="#048BFF"/><rect x="312" y="381" width="4" height="3" fill="#14AEFF"/><rect x="312" y="384" width="4" height="3" fill="#004DFF"/><rect x="312" y="387" width="4" height="3" fill="#007CFF"/><rect x="312" y="390" width="4" height="3" fill="#2FFDE6"/><rect x="312" y="393" width="4" height="3" fill="#2FFEE6"/><rect x="312" y="396" width="4" height="3" fill="#003FFF"/><rect x="312" y="399" width="4" height="3" fill="#0067FF"/><rect x="312" y="402" width="4" height="3" fill="#001BEA"/><rect x="312" y="405" width="4" height="3" fill="#0068FF"/><rect x="316" y="381" width="4" height="3" fill="#003BFF"/><rect x="316" y="384" width="4" height="3" fill="#0002C1"/><rect x="316" y="387" width="4" height="3" fill="#0000A4"/><rect x="316" y="390" width="4" height="3" fill="#1FC6FF"/><rect x="316" y="393" width="4" height="3" fill="#0075FF"/><rect x="316" y="399" width="4" height="3" fill="#11A6FF"/><rect x="316" y="402" width="4" height="3" fill="#0B9AFF"/><rect x="316" y="408" width="4" height="3" fill="#0066FF"/><rect x="320" y="386" width="4" height="3" fill="#0049FF"/><rect x="320" y="389" width="4" height="3" fill="#007DFF"/><rect x="320" y="392" width="4" height="3" fill="#0061FF"/><rect x="320" y="395" width="4" height="3" fill="#17B4FF"/><rect x="320" y="401" width="4" height="3" fill="#18B6FF"/><rect x="320" y="404" width="4" height="3" fill="#22D0FB"/><rect x="320" y="407" width="4" height="3" fill="#33FFD1"/><rect x="320" y="410" width="4" height="3" fill="#0000BB"/><rect x="320" y="413" width="4" height="3" fill="#0040FF"/><rect x="320" y="416" width="4" height="3" fill="#0000A4"/><rect x="324" y="389" width="4" height="3" fill="#18B7FF"/><rect x="324" y="392" width="4" height="3" fill="#22D0FB"/><rect x="324" y="395" width="4" height="3" fill="#35FFC1"/><rect x="324" y="398" width="4" height="3" fill="#0048FF"/><rect x="324" y="401" width="4" height="3" fill="#2FFCE7"/><rect x="324" y="407" width="4" height="3" fill="#002FFF"/><rect x="324" y="410" width="4" height="3" fill="#0000B1"/><rect x="324" y="413" width="4" height="3" fill="#0000B9"/><rect x="324" y="416" width="4" height="3" fill="#001AE9"/><rect x="328" y="387" width="4" height="3" fill="#0000A1"/><rect x="328" y="390" width="4" height="3" fill="#004FFF"/><rect x="328" y="393" width="4" height="3" fill="#30FFDF"/><rect x="328" y="396" width="4" height="3" fill="#12AAFF"/><rect x="328" y="399" width="4" height="3" fill="#16B1FF"/><rect x="328" y="402" width="4" height="3" fill="#6EFF55"/><rect x="328" y="405" width="4" height="3" fill="#0EA0FF"/><rect x="328" y="411" width="4" height="3" fill="#0000B8"/><rect x="328" y="414" width="4" height="3" fill="#0012DB"/><rect x="328" y="420" width="4" height="3" fill="#000090"/><rect x="332" y="397" width="4" height="3" fill="#38FFAC"/><rect x="332" y="400" width="4" height="3" fill="#0A97FF"/><rect x="332" y="403" width="4" height="3" fill="#2CF4EA"/><rect x="332" y="406" width="4" height="3" fill="#32FFD6"/><rect x="332" y="409" width="4" height="3" fill="#12A8FF"/><rect x="332" y="415" width="4" height="3" fill="#001AE9"/><rect x="332" y="418" width="4" height="3" fill="#0014DE"/><rect x="336" y="394" width="4" height="3" fill="#0000B0"/><rect x="336" y="397" width="4" height="3" fill="#0030FF"/><rect x="336" y="400" width="4" height="3" fill="#002DFF"/><rect x="336" y="403" width="4" height="3" fill="#3EFF8C"/><rect x="336" y="406" width="4" height="3" fill="#0994FF"/><rect x="336" y="409" width="4" height="3" fill="#35FFC3"/><rect x="336" y="412" width="4" height="3" fill="#20C9FE"/><rect x="336" y="415" width="4" height="3" fill="#0043FF"/><rect x="340" y="393" width="4" height="3" fill="#0073FF"/><rect x="340" y="396" width="4" height="3" fill="#0013DE"/><rect x="340" y="399" width="4" height="3" fill="#0012DC"/><rect x="340" y="402" width="4" height="3" fill="#2DF5EA"/><rect x="340" y="405" width="4" height="3" fill="#26DEF4"/><rect x="340" y="408" width="4" height="3" fill="#80FF45"/><rect x="340" y="411" width="4" height="3" fill="#14AEFF"/><rect x="340" y="417" width="4" height="3" fill="#0019E7"/><rect x="340" y="426" width="4" height="3" fill="#000090"/><rect x="344" y="394" width="4" height="3" fill="#0053FF"/><rect x="344" y="397" width="4" height="3" fill="#0020F3"/><rect x="344" y="400" width="4" height="3" fill="#17B5FF"/><rect x="344" y="403" width="4" height="3" fill="#0A96FF"/><rect x="344" y="406" width="4" height="3" fill="#0034FF"/><rect x="344" y="409" width="4" height="3" fill="#0081FF"/><rect x="344" y="412" width="4" height="3" fill="#0012DB"/><rect x="344" y="415" width="4" height="3" fill="#002BFF"/><rect x="348" y="395" width="4" height="3" fill="#000BD0"/><rect x="348" y="398" width="4" height="3" fill="#26DDF5"/><rect x="348" y="401" width="4" height="3" fill="#46FF7A"/><rect x="348" y="404" width="4" height="3" fill="#2FFBE7"/><rect x="348" y="407" width="4" height="3" fill="#3FFF83"/><rect x="348" y="410" width="4" height="3" fill="#28E4F1"/><rect x="348" y="413" width="4" height="3" fill="#29E8F0"/><rect x="348" y="416" width="4" height="3" fill="#0000B1"/><rect x="352" y="396" width="4" height="3" fill="#000090"/><rect x="352" y="399" width="4" height="3" fill="#0014DF"/><rect x="352" y="402" width="4" height="3" fill="#000FD7"/><rect x="352" y="405" width="4" height="3" fill="#2DF5EA"/><rect x="352" y="408" width="4" height="3" fill="#80FF45"/><rect x="352" y="414" width="4" height="3" fill="#21CDFC"/><rect x="352" y="417" width="4" height="3" fill="#068FFF"/><rect x="352" y="420" width="4" height="3" fill="#000090"/><rect x="352" y="423" width="4" height="3" fill="#000090"/><rect x="356" y="406" width="4" height="3" fill="#0893FF"/><rect x="356" y="409" width="4" height="3" fill="#19B9FF"/><rect x="356" y="412" width="4" height="3" fill="#24D7F7"/><rect x="356" y="415" width="4" height="3" fill="#55FF6C"/><rect x="356" y="418" width="4" height="3" fill="#0893FF"/><rect x="356" y="421" width="4" height="3" fill="#000090"/><rect x="360" y="374" width="4" height="3" fill="#000090"/><rect x="360" y="377" width="4" height="3" fill="#0013DD"/><rect x="360" y="380" width="4" height="3" fill="#001FF1"/><rect x="360" y="383" width="4" height="3" fill="#0071FF"/><rect x="360" y="386" width="4" height="3" fill="#0070FF"/><rect x="360" y="389" width="4" height="3" fill="#57FF6A"/><rect x="360" y="392" width="4" height="3" fill="#26DCF5"/><rect x="360" y="395" width="4" height="3" fill="#2AEBEE"/><rect x="360" y="398" width="4" height="3" fill="#31FFDB"/><rect x="360" y="401" width="4" height="3" fill="#4EFF72"/><rect x="360" y="404" width="4" height="3" fill="#0038FF"/><rect x="360" y="407" width="4" height="3" fill="#0064FF"/><rect x="360" y="413" width="4" height="3" fill="#000090"/><rect x="360" y="422" width="4" height="3" fill="#0024F9"/><rect x="364" y="281" width="4" height="3" fill="#000ACF"/><rect x="364" y="284" width="4" height="3" fill="#0001C0"/><rect x="364" y="290" width="4" height="3" fill="#000098"/><rect x="364" y="293" width="4" height="3" fill="#000090"/><rect x="364" y="296" width="4" height="3" fill="#0037FF"/><rect x="364" y="302" width="4" height="3" fill="#0010D9"/><rect x="364" y="311" width="4" height="3" fill="#000090"/><rect x="364" y="314" width="4" height="3" fill="#001CEB"/><rect x="364" y="320" width="4" height="3" fill="#000090"/><rect x="364" y="323" width="4" height="3" fill="#24D6F8"/><rect x="364" y="332" width="4" height="3" fill="#003BFF"/><rect x="364" y="335" width="4" height="3" fill="#0D9EFF"/><rect x="364" y="338" width="4" height="3" fill="#0002C2"/><rect x="364" y="341" width="4" height="3" fill="#000090"/><rect x="364" y="344" width="4" height="3" fill="#0062FF"/><rect x="364" y="350" width="4" height="3" fill="#12A8FF"/><rect x="364" y="353" width="4" height="3" fill="#0000A1"/><rect x="364" y="356" width="4" height="3" fill="#001AE8"/><rect x="364" y="359" width="4" height="3" fill="#0076FF"/><rect x="364" y="368" width="4" height="3" fill="#003EFF"/><rect x="368" y="290" width="4" height="3" fill="#000090"/><rect x="368" y="293" width="4" height="3" fill="#000090"/><rect x="368" y="296" width="4" height="3" fill="#000099"/><rect x="368" y="305" width="4" height="3" fill="#000090"/><rect x="368" y="308" width="4" height="3" fill="#000090"/><rect x="368" y="311" width="4" height="3" fill="#0002C2"/><rect x="368" y="317" width="4" height="3" fill="#0082FF"/><rect x="368" y="320" width="4" height="3" fill="#001EEF"/><rect x="368" y="323" width="4" height="3" fill="#000090"/><rect x="368" y="326" width="4" height="3" fill="#0081FF"/><rect x="368" y="329" width="4" height="3" fill="#000090"/><rect x="368" y="332" width="4" height="3" fill="#00009C"/><rect x="368" y="335" width="4" height="3" fill="#0000B1"/><rect x="368" y="338" width="4" height="3" fill="#0000BE"/><rect x="368" y="341" width="4" height="3" fill="#000094"/><rect x="368" y="344" width="4" height="3" fill="#0000B1"/><rect x="368" y="347" width="4" height="3" fill="#000DD3"/><rect x="368" y="353" width="4" height="3" fill="#0052FF"/><rect x="368" y="359" width="4" height="3" fill="#000CD1"/><rect x="372" y="316" width="4" height="3" fill="#31FFDF"/><rect x="372" y="322" width="4" height="3" fill="#0020F2"/><rect x="372" y="325" width="4" height="3" fill="#0000BD"/><rect x="372" y="328" width="4" height="3" fill="#0388FF"/><rect x="372" y="343" width="4" height="3" fill="#003FFF"/><rect x="372" y="346" width="4" height="3" fill="#0023F7"/><rect x="372" y="349" width="4" height="3" fill="#0D9DFF"/><rect x="372" y="355" width="4" height="3" fill="#006BFF"/><rect x="372" y="364" width="4" height="3" fill="#0019E8"/><rect x="372" y="367" width="4" height="3" fill="#0021F5"/><rect x="372" y="373" width="4" height="3" fill="#0000A9"/><rect x="372" y="379" width="4" height="3" fill="#0000B9"/><rect x="372" y="382" width="4" height="3" fill="#0000A3"/><rect x="376" y="337" width="4" height="3" fill="#000CD3"/><rect x="376" y="340" width="4" height="3" fill="#068FFF"/><rect x="376" y="346" width="4" height="3" fill="#000090"/><rect x="376" y="355" width="4" height="3" fill="#0049FF"/><rect x="376" y="358" width="4" height="3" fill="#003AFF"/><rect x="376" y="367" width="4" height="3" fill="#0054FF"/><rect x="376" y="370" width="4" height="3" fill="#31FFD9"/><rect x="376" y="373" width="4" height="3" fill="#005EFF"/><rect x="376" y="376" width="4" height="3" fill="#17B4FF"/><rect x="376" y="379" width="4" height="3" fill="#006FFF"/><rect x="376" y="382" width="4" height="3" fill="#005EFF"/><rect x="376" y="385" width="4" height="3" fill="#0790FF"/><rect x="376" y="388" width="4" height="3" fill="#00009A"/><rect x="376" y="391" width="4" height="3" fill="#0001C1"/><rect x="380" y="339" width="4" height="3" fill="#0000B0"/><rect x="380" y="342" width="4" height="3" fill="#0EA0FF"/><rect x="380" y="348" width="4" height="3" fill="#007FFF"/><rect x="380" y="351" width="4" height="3" fill="#0000A1"/><rect x="380" y="354" width="4" height="3" fill="#1DC1FF"/><rect x="380" y="357" width="4" height="3" fill="#0063FF"/><rect x="380" y="360" width="4" height="3" fill="#0387FF"/><rect x="380" y="363" width="4" height="3" fill="#002BFF"/><rect x="380" y="369" width="4" height="3" fill="#0076FF"/><rect x="380" y="372" width="4" height="3" fill="#1BBDFF"/><rect x="380" y="378" width="4" height="3" fill="#19B8FF"/><rect x="380" y="381" width="4" height="3" fill="#0013DE"/><rect x="380" y="387" width="4" height="3" fill="#0016E2"/><rect x="380" y="393" width="4" height="3" fill="#0018E6"/><rect x="384" y="346" width="4" height="3" fill="#000090"/><rect x="384" y="349" width="4" height="3" fill="#000090"/><rect x="384" y="358" width="4" height="3" fill="#2DF7E9"/><rect x="384" y="361" width="4" height="3" fill="#0040FF"/><rect x="384" y="364" width="4" height="3" fill="#0028FF"/><rect x="384" y="367" width="4" height="3" fill="#006FFF"/><rect x="384" y="373" width="4" height="3" fill="#0790FF"/><rect x="384" y="376" width="4" height="3" fill="#80FF45"/><rect x="384" y="379" width="4" height="3" fill="#1BBEFF"/><rect x="384" y="382" width="4" height="3" fill="#0012DB"/><rect x="384" y="385" width="4" height="3" fill="#36FFBE"/><rect x="384" y="388" width="4" height="3" fill="#24D6F8"/><rect x="384" y="391" width="4" height="3" fill="#17B5FF"/><rect x="384" y="394" width="4" height="3" fill="#005DFF"/><rect x="384" y="397" width="4" height="3" fill="#0041FF"/><rect x="384" y="400" width="4" height="3" fill="#00009A"/><rect x="384" y="403" width="4" height="3" fill="#000092"/><rect x="388" y="383" width="4" height="3" fill="#0EA0FF"/><rect x="388" y="386" width="4" height="3" fill="#0388FF"/><rect x="388" y="389" width="4" height="3" fill="#3DFF90"/><rect x="388" y="392" width="4" height="3" fill="#2DF5EA"/><rect x="388" y="395" width="4" height="3" fill="#3AFFA3"/><rect x="388" y="398" width="4" height="3" fill="#0892FF"/><rect x="388" y="404" width="4" height="3" fill="#24D7F7"/><rect x="388" y="407" width="4" height="3" fill="#001CEC"/><rect x="388" y="410" width="4" height="3" fill="#0000BB"/><rect x="388" y="413" width="4" height="3" fill="#0000B2"/><rect x="388" y="419" width="4" height="3" fill="#000090"/><rect x="392" y="379" width="4" height="3" fill="#0001C0"/><rect x="392" y="382" width="4" height="3" fill="#006DFF"/><rect x="392" y="385" width="4" height="3" fill="#0000A9"/><rect x="392" y="388" width="4" height="3" fill="#0038FF"/><rect x="392" y="391" width="4" height="3" fill="#6AFF59"/><rect x="392" y="394" width="4" height="3" fill="#6BFF58"/><rect x="392" y="397" width="4" height="3" fill="#007EFF"/><rect x="392" y="400" width="4" height="3" fill="#001FF0"/><rect x="392" y="406" width="4" height="3" fill="#000090"/><rect x="396" y="373" width="4" height="3" fill="#0074FF"/><rect x="396" y="376" width="4" height="3" fill="#0076FF"/><rect x="396" y="379" width="4" height="3" fill="#0009CC"/><rect x="396" y="382" width="4" height="3" fill="#0030FF"/><rect x="396" y="385" width="4" height="3" fill="#68FF5A"/><rect x="396" y="388" width="4" height="3" fill="#69FF59"/><rect x="396" y="391" width="4" height="3" fill="#40FF7F"/><rect x="396" y="394" width="4" height="3" fill="#3DFF8F"/><rect x="396" y="397" width="4" height="3" fill="#30FFE3"/><rect x="396" y="400" width="4" height="3" fill="#1CBFFF"/><rect x="396" y="403" width="4" height="3" fill="#004AFF"/><rect x="396" y="406" width="4" height="3" fill="#0000AC"/><rect x="396" y="412" width="4" height="3" fill="#0015E0"/><rect x="400" y="379" width="4" height="3" fill="#000090"/><rect x="400" y="382" width="4" height="3" fill="#2BEEED"/><rect x="400" y="385" width="4" height="3" fill="#004FFF"/><rect x="400" y="388" width="4" height="3" fill="#0995FF"/><rect x="400" y="394" width="4" height="3" fill="#3FFF80"/><rect x="400" y="400" width="4" height="3" fill="#0051FF"/><rect x="400" y="403" width="4" height="3" fill="#0000B8"/><rect x="404" y="387" width="4" height="3" fill="#000DD4"/><rect x="404" y="390" width="4" height="3" fill="#004EFF"/><rect x="404" y="393" width="4" height="3" fill="#21CEFB"/><rect x="404" y="399" width="4" height="3" fill="#2AEAEF"/><rect x="404" y="405" width="4" height="3" fill="#30FFE5"/><rect x="404" y="408" width="4" height="3" fill="#000096"/><rect x="404" y="411" width="4" height="3" fill="#0000BA"/><rect x="404" y="417" width="4" height="3" fill="#000090"/><rect x="408" y="387" width="4" height="3" fill="#0000A7"/><rect x="408" y="393" width="4" height="3" fill="#1ABCFF"/><rect x="408" y="396" width="4" height="3" fill="#21CCFD"/><rect x="408" y="399" width="4" height="3" fill="#0A97FF"/><rect x="408" y="408" width="4" height="3" fill="#000090"/><rect x="408" y="411" width="4" height="3" fill="#0000A4"/><rect x="412" y="386" width="4" height="3" fill="#000092"/><rect x="412" y="389" width="4" height="3" fill="#0039FF"/><rect x="412" y="392" width="4" height="3" fill="#00009E"/><rect x="412" y="395" width="4" height="3" fill="#006EFF"/><rect x="412" y="398" width="4" height="3" fill="#16B2FF"/><rect x="412" y="401" width="4" height="3" fill="#17B4FF"/><rect x="412" y="404" width="4" height="3" fill="#0039FF"/><rect x="412" y="407" width="4" height="3" fill="#002EFF"/><rect x="412" y="410" width="4" height="3" fill="#000DD4"/><rect x="416" y="393" width="4" height="3" fill="#0079FF"/><rect x="416" y="396" width="4" height="3" fill="#0026FB"/><rect x="416" y="399" width="4" height="3" fill="#16B2FF"/><rect x="416" y="405" width="4" height="3" fill="#058DFF"/><rect x="416" y="408" width="4" height="3" fill="#0000AB"/><rect x="416" y="417" width="4" height="3" fill="#000090"/><rect x="420" y="387" width="4" height="3" fill="#0022F6"/><rect x="420" y="390" width="4" height="3" fill="#19B9FF"/><rect x="420" y="393" width="4" height="3" fill="#0047FF"/><rect x="420" y="396" width="4" height="3" fill="#0065FF"/><rect x="420" y="399" width="4" height="3" fill="#7FFF45"/><rect x="420" y="402" width="4" height="3" fill="#30FFE1"/><rect x="420" y="405" width="4" height="3" fill="#000FD7"/><rect x="420" y="408" width="4" height="3" fill="#000ACF"/><rect x="424" y="389" width="4" height="3" fill="#0000A3"/><rect x="424" y="392" width="4" height="3" fill="#0016E1"/><rect x="424" y="398" width="4" height="3" fill="#0C9CFF"/><rect x="424" y="401" width="4" height="3" fill="#35FFC4"/><rect x="424" y="404" width="4" height="3" fill="#0017E3"/><rect x="424" y="407" width="4" height="3" fill="#0019E7"/><rect x="424" y="410" width="4" height="3" fill="#0026FB"/><rect x="424" y="413" width="4" height="3" fill="#000090"/><rect x="428" y="386" width="4" height="3" fill="#002CFF"/><rect x="428" y="389" width="4" height="3" fill="#000DD3"/><rect x="428" y="392" width="4" height="3" fill="#0893FF"/><rect x="428" y="395" width="4" height="3" fill="#0048FF"/><rect x="428" y="398" width="4" height="3" fill="#12AAFF"/><rect x="428" y="404" width="4" height="3" fill="#2AECEE"/><rect x="428" y="410" width="4" height="3" fill="#000090"/><rect x="432" y="388" width="4" height="3" fill="#000090"/><rect x="432" y="394" width="4" height="3" fill="#0024F9"/><rect x="432" y="397" width="4" height="3" fill="#33FFCE"/><rect x="432" y="400" width="4" height="3" fill="#20C9FE"/><rect x="432" y="403" width="4" height="3" fill="#0D9EFF"/><rect x="432" y="406" width="4" height="3" fill="#38FFB2"/><rect x="432" y="409" width="4" height="3" fill="#3EFF86"/><rect x="432" y="412" width="4" height="3" fill="#001FF0"/><rect x="432" y="415" width="4" height="3" fill="#00009A"/><rect x="436" y="396" width="4" height="3" fill="#005BFF"/><rect x="436" y="399" width="4" height="3" fill="#1CBFFF"/><rect x="436" y="402" width="4" height="3" fill="#11A6FF"/><rect x="436" y="405" width="4" height="3" fill="#30FFE4"/><rect x="436" y="411" width="4" height="3" fill="#34FFC7"/><rect x="436" y="414" width="4" height="3" fill="#32FFD8"/><rect x="436" y="417" width="4" height="3" fill="#007EFF"/><rect x="440" y="397" width="4" height="3" fill="#0000B4"/><rect x="440" y="400" width="4" height="3" fill="#0995FF"/><rect x="440" y="403" width="4" height="3" fill="#11A7FF"/><rect x="440" y="406" width="4" height="3" fill="#3CFF96"/><rect x="440" y="409" width="4" height="3" fill="#80FF45"/><rect x="440" y="412" width="4" height="3" fill="#28E3F2"/><rect x="440" y="415" width="4" height="3" fill="#23D5F8"/><rect x="440" y="418" width="4" height="3" fill="#0019E8"/><rect x="440" y="421" width="4" height="3" fill="#0000A7"/><rect x="444" y="344" width="4" height="3" fill="#0A96FF"/><rect x="444" y="347" width="4" height="3" fill="#000090"/><rect x="444" y="350" width="4" height="3" fill="#0000AC"/><rect x="444" y="353" width="4" height="3" fill="#0036FF"/><rect x="444" y="359" width="4" height="3" fill="#0068FF"/><rect x="444" y="362" width="4" height="3" fill="#0995FF"/><rect x="444" y="368" width="4" height="3" fill="#2BEEED"/><rect x="444" y="374" width="4" height="3" fill="#3EFF8C"/><rect x="444" y="377" width="4" height="3" fill="#0080FF"/><rect x="444" y="380" width="4" height="3" fill="#0025FB"/><rect x="444" y="383" width="4" height="3" fill="#004AFF"/><rect x="444" y="386" width="4" height="3" fill="#0056FF"/><rect x="444" y="389" width="4" height="3" fill="#000090"/><rect x="448" y="275" width="4" height="3" fill="#003FFF"/><rect x="448" y="281" width="4" height="3" fill="#0000B2"/><rect x="448" y="284" width="4" height="3" fill="#068DFF"/><rect x="448" y="287" width="4" height="3" fill="#000090"/><rect x="448" y="296" width="4" height="3" fill="#000090"/><rect x="448" y="299" width="4" height="3" fill="#000090"/><rect x="448" y="305" width="4" height="3" fill="#000090"/><rect x="448" y="308" width="4" height="3" fill="#003CFF"/><rect x="448" y="311" width="4" height="3" fill="#0027FE"/><rect x="448" y="317" width="4" height="3" fill="#000090"/><rect x="448" y="320" width="4" height="3" fill="#0000A7"/><rect x="448" y="326" width="4" height="3" fill="#001AE8"/><rect x="448" y="329" width="4" height="3" fill="#0033FF"/><rect x="448" y="332" width="4" height="3" fill="#0027FE"/><rect x="448" y="335" width="4" height="3" fill="#001AE8"/><rect x="448" y="341" width="4" height="3" fill="#000ED6"/><rect x="448" y="344" width="4" height="3" fill="#0000A7"/><rect x="448" y="347" width="4" height="3" fill="#0007C9"/><rect x="448" y="350" width="4" height="3" fill="#000090"/><rect x="452" y="295" width="4" height="3" fill="#000090"/><rect x="452" y="298" width="4" height="3" fill="#0010D8"/><rect x="452" y="301" width="4" height="3" fill="#0000A4"/><rect x="452" y="310" width="4" height="3" fill="#000090"/><rect x="452" y="313" width="4" height="3" fill="#0058FF"/><rect x="452" y="319" width="4" height="3" fill="#0048FF"/><rect x="452" y="322" width="4" height="3" fill="#0000AB"/><rect x="452" y="325" width="4" height="3" fill="#0041FF"/><rect x="452" y="328" width="4" height="3" fill="#004AFF"/><rect x="452" y="334" width="4" height="3" fill="#0000A1"/><rect x="452" y="337" width="4" height="3" fill="#0023F8"/><rect x="452" y="340" width="4" height="3" fill="#0021F4"/><rect x="452" y="343" width="4" height="3" fill="#0008CC"/><rect x="452" y="346" width="4" height="3" fill="#0014DF"/><rect x="452" y="349" width="4" height="3" fill="#20C9FE"/><rect x="452" y="352" width="4" height="3" fill="#0001C0"/><rect x="452" y="355" width="4" height="3" fill="#0013DD"/><rect x="452" y="358" width="4" height="3" fill="#006FFF"/><rect x="452" y="361" width="4" height="3" fill="#1CBFFF"/><rect x="452" y="364" width="4" height="3" fill="#0060FF"/><rect x="452" y="367" width="4" height="3" fill="#003AFF"/><rect x="452" y="370" width="4" height="3" fill="#0001BF"/><rect x="452" y="373" width="4" height="3" fill="#0000AB"/><rect x="456" y="320" width="4" height="3" fill="#000090"/><rect x="456" y="332" width="4" height="3" fill="#0055FF"/><rect x="456" y="335" width="4" height="3" fill="#0072FF"/><rect x="456" y="341" width="4" height="3" fill="#001CEB"/><rect x="456" y="344" width="4" height="3" fill="#0000A6"/><rect x="456" y="347" width="4" height="3" fill="#000090"/><rect x="456" y="353" width="4" height="3" fill="#001AE9"/><rect x="456" y="356" width="4" height="3" fill="#0020F2"/><rect x="456" y="362" width="4" height="3" fill="#0054FF"/><rect x="456" y="365" width="4" height="3" fill="#003CFF"/><rect x="456" y="368" width="4" height="3" fill="#006BFF"/><rect x="456" y="371" width="4" height="3" fill="#068FFF"/><rect x="456" y="374" width="4" height="3" fill="#000DD3"/><rect x="456" y="377" width="4" height="3" fill="#0489FF"/><rect x="456" y="380" width="4" height="3" fill="#000090"/><rect x="456" y="383" width="4" height="3" fill="#000090"/><rect x="460" y="346" width="4" height="3" fill="#002EFF"/><rect x="460" y="349" width="4" height="3" fill="#000090"/><rect x="460" y="352" width="4" height="3" fill="#0045FF"/><rect x="460" y="355" width="4" height="3" fill="#000099"/><rect x="460" y="358" width="4" height="3" fill="#15AFFF"/><rect x="460" y="361" width="4" height="3" fill="#18B6FF"/><rect x="460" y="367" width="4" height="3" fill="#2FFBE7"/><rect x="460" y="370" width="4" height="3" fill="#26DDF5"/><rect x="460" y="373" width="4" height="3" fill="#1CC0FF"/><rect x="460" y="376" width="4" height="3" fill="#0043FF"/><rect x="460" y="382" width="4" height="3" fill="#20CBFD"/><rect x="460" y="385" width="4" height="3" fill="#0000B6"/><rect x="464" y="354" width="4" height="3" fill="#001EF0"/><rect x="464" y="360" width="4" height="3" fill="#0015E0"/><rect x="464" y="363" width="4" height="3" fill="#004EFF"/><rect x="464" y="366" width="4" height="3" fill="#001AE9"/><rect x="464" y="372" width="4" height="3" fill="#0045FF"/><rect x="464" y="375" width="4" height="3" fill="#0892FF"/><rect x="464" y="378" width="4" height="3" fill="#0075FF"/><rect x="464" y="381" width="4" height="3" fill="#1EC4FF"/><rect x="464" y="384" width="4" height="3" fill="#004EFF"/><rect x="464" y="387" width="4" height="3" fill="#0000A6"/><rect x="464" y="390" width="4" height="3" fill="#000090"/><rect x="468" y="365" width="4" height="3" fill="#0000BF"/><rect x="468" y="368" width="4" height="3" fill="#000090"/><rect x="468" y="371" width="4" height="3" fill="#15B0FF"/><rect x="468" y="374" width="4" height="3" fill="#007FFF"/><rect x="468" y="377" width="4" height="3" fill="#28E3F2"/><rect x="468" y="380" width="4" height="3" fill="#0FA1FF"/><rect x="468" y="383" width="4" height="3" fill="#0012DB"/><rect x="468" y="386" width="4" height="3" fill="#13ABFF"/><rect x="468" y="389" width="4" height="3" fill="#37FFB4"/><rect x="468" y="392" width="4" height="3" fill="#34FFCC"/><rect x="468" y="395" width="4" height="3" fill="#57FF6A"/><rect x="468" y="398" width="4" height="3" fill="#0043FF"/><rect x="468" y="401" width="4" height="3" fill="#0A98FF"/><rect x="468" y="404" width="4" height="3" fill="#0013DE"/><rect x="468" y="413" width="4" height="3" fill="#000095"/><rect x="472" y="383" width="4" height="3" fill="#0060FF"/><rect x="472" y="386" width="4" height="3" fill="#0790FF"/><rect x="472" y="389" width="4" height="3" fill="#007CFF"/><rect x="472" y="395" width="4" height="3" fill="#25DAF6"/><rect x="472" y="398" width="4" height="3" fill="#80FF45"/><rect x="472" y="401" width="4" height="3" fill="#0A98FF"/><rect x="472" y="404" width="4" height="3" fill="#0C9CFF"/><rect x="472" y="407" width="4" height="3" fill="#003EFF"/><rect x="472" y="410" width="4" height="3" fill="#0000BB"/><rect x="476" y="382" width="4" height="3" fill="#0041FF"/><rect x="476" y="385" width="4" height="3" fill="#0027FE"/><rect x="476" y="388" width="4" height="3" fill="#21CBFD"/><rect x="476" y="391" width="4" height="3" fill="#0070FF"/><rect x="476" y="394" width="4" height="3" fill="#49FF76"/><rect x="476" y="397" width="4" height="3" fill="#28E6F1"/><rect x="476" y="400" width="4" height="3" fill="#22CFFB"/><rect x="476" y="403" width="4" height="3" fill="#0A98FF"/><rect x="480" y="379" width="4" height="3" fill="#000090"/><rect x="480" y="382" width="4" height="3" fill="#0183FF"/><rect x="480" y="385" width="4" height="3" fill="#007BFF"/><rect x="480" y="388" width="4" height="3" fill="#0B99FF"/><rect x="480" y="391" width="4" height="3" fill="#0B9AFF"/><rect x="480" y="394" width="4" height="3" fill="#30FFE1"/><rect x="480" y="397" width="4" height="3" fill="#80FF45"/><rect x="480" y="400" width="4" height="3" fill="#6EFF55"/><rect x="480" y="403" width="4" height="3" fill="#0042FF"/><rect x="480" y="406" width="4" height="3" fill="#0054FF"/><rect x="480" y="409" width="4" height="3" fill="#0007C9"/><rect x="480" y="412" width="4" height="3" fill="#000090"/><rect x="484" y="384" width="4" height="3" fill="#003DFF"/><rect x="484" y="387" width="4" height="3" fill="#0056FF"/><rect x="484" y="390" width="4" height="3" fill="#17B5FF"/><rect x="484" y="393" width="4" height="3" fill="#80FF45"/><rect x="484" y="396" width="4" height="3" fill="#19B9FF"/><rect x="484" y="405" width="4" height="3" fill="#058BFF"/><rect x="484" y="408" width="4" height="3" fill="#0013DD"/><rect x="484" y="414" width="4" height="3" fill="#000090"/><rect x="488" y="388" width="4" height="3" fill="#000BD0"/><rect x="488" y="391" width="4" height="3" fill="#0067FF"/><rect x="488" y="394" width="4" height="3" fill="#0067FF"/><rect x="488" y="397" width="4" height="3" fill="#058BFF"/><rect x="488" y="400" width="4" height="3" fill="#46FF7A"/><rect x="488" y="403" width="4" height="3" fill="#0042FF"/><rect x="488" y="406" width="4" height="3" fill="#001EEE"/><rect x="488" y="409" width="4" height="3" fill="#003DFF"/><rect x="488" y="412" width="4" height="3" fill="#000090"/><rect x="492" y="386" width="4" height="3" fill="#000090"/><rect x="492" y="389" width="4" height="3" fill="#004CFF"/><rect x="492" y="392" width="4" height="3" fill="#27E1F3"/><rect x="492" y="395" width="4" height="3" fill="#32FFD6"/><rect x="492" y="398" width="4" height="3" fill="#1BBEFF"/><rect x="492" y="401" width="4" height="3" fill="#2FFCE6"/><rect x="492" y="404" width="4" height="3" fill="#0030FF"/><rect x="492" y="407" width="4" height="3" fill="#004CFF"/><rect x="492" y="410" width="4" height="3" fill="#1CC0FF"/><rect x="492" y="413" width="4" height="3" fill="#000090"/><rect x="496" y="391" width="4" height="3" fill="#0A96FF"/><rect x="496" y="394" width="4" height="3" fill="#2EFAE8"/><rect x="496" y="397" width="4" height="3" fill="#17B4FF"/><rect x="496" y="400" width="4" height="3" fill="#2BF0EC"/><rect x="496" y="403" width="4" height="3" fill="#13ACFF"/><rect x="496" y="406" width="4" height="3" fill="#36FFBA"/><rect x="496" y="409" width="4" height="3" fill="#000090"/><rect x="500" y="394" width="4" height="3" fill="#000090"/><rect x="500" y="397" width="4" height="3" fill="#001EEF"/><rect x="500" y="400" width="4" height="3" fill="#0016E3"/><rect x="500" y="403" width="4" height="3" fill="#20CBFD"/><rect x="500" y="406" width="4" height="3" fill="#0010D8"/><rect x="500" y="409" width="4" height="3" fill="#048AFF"/><rect x="500" y="412" width="4" height="3" fill="#0023F7"/><rect x="500" y="418" width="4" height="3" fill="#001FF1"/><rect x="504" y="396" width="4" height="3" fill="#0001BF"/><rect x="504" y="399" width="4" height="3" fill="#0387FF"/><rect x="504" y="402" width="4" height="3" fill="#0C9CFF"/><rect x="504" y="405" width="4" height="3" fill="#0078FF"/><rect x="504" y="408" width="4" height="3" fill="#20C9FE"/><rect x="504" y="411" width="4" height="3" fill="#80FF45"/><rect x="504" y="414" width="4" height="3" fill="#78FF4C"/><rect x="504" y="417" width="4" height="3" fill="#1BBDFF"/><rect x="504" y="420" width="4" height="3" fill="#000090"/><rect x="504" y="423" width="4" height="3" fill="#0004C4"/><rect x="508" y="391" width="4" height="3" fill="#0036FF"/><rect x="508" y="394" width="4" height="3" fill="#000CD1"/><rect x="508" y="397" width="4" height="3" fill="#001AE9"/><rect x="508" y="400" width="4" height="3" fill="#29E9EF"/><rect x="508" y="403" width="4" height="3" fill="#058DFF"/><rect x="508" y="406" width="4" height="3" fill="#3EFF8B"/><rect x="508" y="409" width="4" height="3" fill="#22CFFB"/><rect x="508" y="412" width="4" height="3" fill="#001EEE"/><rect x="508" y="415" width="4" height="3" fill="#000090"/><rect x="512" y="395" width="4" height="3" fill="#0000B6"/><rect x="512" y="398" width="4" height="3" fill="#002CFF"/><rect x="512" y="401" width="4" height="3" fill="#1CBFFF"/><rect x="512" y="404" width="4" height="3" fill="#22CFFB"/><rect x="512" y="407" width="4" height="3" fill="#26DDF5"/><rect x="512" y="410" width="4" height="3" fill="#3AFFA4"/><rect x="512" y="413" width="4" height="3" fill="#0021F4"/><rect x="512" y="422" width="4" height="3" fill="#000090"/><rect x="516" y="395" width="4" height="3" fill="#000090"/><rect x="516" y="398" width="4" height="3" fill="#0000BE"/><rect x="516" y="401" width="4" height="3" fill="#22CFFB"/><rect x="516" y="407" width="4" height="3" fill="#0024F9"/><rect x="516" y="410" width="4" height="3" fill="#13ABFF"/><rect x="516" y="413" width="4" height="3" fill="#000090"/><rect x="520" y="395" width="4" height="3" fill="#0000A9"/><rect x="520" y="401" width="4" height="3" fill="#24D8F7"/><rect x="520" y="404" width="4" height="3" fill="#23D3F9"/><rect x="520" y="407" width="4" height="3" fill="#3DFF90"/><rect x="520" y="410" width="4" height="3" fill="#80FF45"/><rect x="520" y="413" width="4" height="3" fill="#0040FF"/><rect x="520" y="416" width="4" height="3" fill="#000090"/><rect x="520" y="419" width="4" height="3" fill="#000090"/><rect x="520" y="422" width="4" height="3" fill="#000090"/><rect x="524" y="401" width="4" height="3" fill="#0081FF"/><rect x="524" y="407" width="4" height="3" fill="#30FFE4"/><rect x="524" y="410" width="4" height="3" fill="#31FFDB"/><rect x="524" y="416" width="4" height="3" fill="#0063FF"/><rect x="524" y="419" width="4" height="3" fill="#000090"/><rect x="524" y="422" width="4" height="3" fill="#000090"/><rect x="528" y="404" width="4" height="3" fill="#000ED5"/><rect x="528" y="407" width="4" height="3" fill="#001BEA"/><rect x="528" y="410" width="4" height="3" fill="#0032FF"/><rect x="528" y="413" width="4" height="3" fill="#0023F7"/><rect x="528" y="416" width="4" height="3" fill="#006DFF"/><rect x="528" y="419" width="4" height="3" fill="#1ABCFF"/><rect x="528" y="422" width="4" height="3" fill="#000090"/><rect x="528" y="425" width="4" height="3" fill="#0037FF"/><rect x="528" y="428" width="4" height="3" fill="#000090"/><rect x="528" y="431" width="4" height="3" fill="#0000B4"/><rect x="532" y="346" width="4" height="3" fill="#0052FF"/><rect x="532" y="349" width="4" height="3" fill="#000CD2"/><rect x="532" y="352" width="4" height="3" fill="#000090"/><rect x="532" y="355" width="4" height="3" fill="#0015E0"/><rect x="532" y="358" width="4" height="3" fill="#0045FF"/><rect x="532" y="361" width="4" height="3" fill="#0017E4"/><rect x="532" y="364" width="4" height="3" fill="#0022F5"/><rect x="532" y="367" width="4" height="3" fill="#0073FF"/><rect x="532" y="370" width="4" height="3" fill="#2EFAE7"/><rect x="532" y="376" width="4" height="3" fill="#1CC1FF"/><rect x="532" y="379" width="4" height="3" fill="#058BFF"/><rect x="532" y="382" width="4" height="3" fill="#0056FF"/><rect x="532" y="385" width="4" height="3" fill="#0066FF"/><rect x="532" y="388" width="4" height="3" fill="#001CEC"/><rect x="532" y="391" width="4" height="3" fill="#0000A8"/><rect x="536" y="280" width="4" height="3" fill="#0003C3"/><rect x="536" y="292" width="4" height="3" fill="#000090"/><rect x="536" y="301" width="4" height="3" fill="#0000B6"/><rect x="536" y="307" width="4" height="3" fill="#0050FF"/><rect x="536" y="310" width="4" height="3" fill="#000090"/><rect x="536" y="316" width="4" height="3" fill="#000ED5"/><rect x="536" y="322" width="4" height="3" fill="#0005C7"/><rect x="536" y="325" width="4" height="3" fill="#0000A5"/><rect x="536" y="328" width="4" height="3" fill="#0045FF"/><rect x="536" y="331" width="4" height="3" fill="#0017E4"/><rect x="536" y="334" width="4" height="3" fill="#0031FF"/><rect x="536" y="337" width="4" height="3" fill="#0000B7"/><rect x="536" y="340" width="4" height="3" fill="#0008CB"/><rect x="536" y="343" width="4" height="3" fill="#000090"/><rect x="536" y="346" width="4" height="3" fill="#001AE8"/><rect x="536" y="352" width="4" height="3" fill="#0000A8"/><rect x="536" y="355" width="4" height="3" fill="#000090"/><rect x="536" y="358" width="4" height="3" fill="#0080FF"/><rect x="536" y="361" width="4" height="3" fill="#0018E5"/><rect x="536" y="367" width="4" height="3" fill="#000090"/><rect x="540" y="291" width="4" height="3" fill="#000090"/><rect x="540" y="303" width="4" height="3" fill="#0000A7"/><rect x="540" y="306" width="4" height="3" fill="#0001C0"/><rect x="540" y="309" width="4" height="3" fill="#0041FF"/><rect x="540" y="312" width="4" height="3" fill="#0008CB"/><rect x="540" y="315" width="4" height="3" fill="#000090"/><rect x="540" y="321" width="4" height="3" fill="#00009E"/><rect x="540" y="330" width="4" height="3" fill="#0000B4"/><rect x="540" y="339" width="4" height="3" fill="#0000B0"/><rect x="540" y="345" width="4" height="3" fill="#0073FF"/><rect x="540" y="351" width="4" height="3" fill="#000099"/><rect x="540" y="357" width="4" height="3" fill="#003DFF"/><rect x="540" y="363" width="4" height="3" fill="#0027FE"/><rect x="540" y="366" width="4" height="3" fill="#000090"/><rect x="540" y="375" width="4" height="3" fill="#0000B5"/><rect x="540" y="381" width="4" height="3" fill="#000096"/><rect x="544" y="329" width="4" height="3" fill="#0003C3"/><rect x="544" y="332" width="4" height="3" fill="#0000A4"/><rect x="544" y="338" width="4" height="3" fill="#000090"/><rect x="544" y="350" width="4" height="3" fill="#24D7F7"/><rect x="544" y="353" width="4" height="3" fill="#0053FF"/><rect x="544" y="356" width="4" height="3" fill="#0000A4"/><rect x="544" y="359" width="4" height="3" fill="#005FFF"/><rect x="544" y="362" width="4" height="3" fill="#22D1FA"/><rect x="544" y="365" width="4" height="3" fill="#21CDFC"/><rect x="544" y="371" width="4" height="3" fill="#006DFF"/><rect x="544" y="374" width="4" height="3" fill="#12A9FF"/><rect x="544" y="377" width="4" height="3" fill="#0A98FF"/><rect x="544" y="380" width="4" height="3" fill="#0386FF"/><rect x="544" y="383" width="4" height="3" fill="#0081FF"/><rect x="544" y="386" width="4" height="3" fill="#000091"/><rect x="548" y="348" width="4" height="3" fill="#0043FF"/><rect x="548" y="351" width="4" height="3" fill="#000FD7"/><rect x="548" y="354" width="4" height="3" fill="#002AFF"/><rect x="548" y="357" width="4" height="3" fill="#0000A9"/><rect x="548" y="360" width="4" height="3" fill="#007DFF"/><rect x="548" y="363" width="4" height="3" fill="#001FF1"/><rect x="548" y="366" width="4" height="3" fill="#0008CB"/><rect x="548" y="369" width="4" height="3" fill="#001FF1"/><rect x="548" y="375" width="4" height="3" fill="#000098"/><rect x="548" y="378" width="4" height="3" fill="#0183FF"/><rect x="548" y="384" width="4" height="3" fill="#2BEFEC"/><rect x="548" y="387" width="4" height="3" fill="#003CFF"/><rect x="548" y="393" width="4" height="3" fill="#0026FC"/><rect x="548" y="396" width="4" height="3" fill="#0025FA"/><rect x="552" y="353" width="4" height="3" fill="#0000AC"/><rect x="552" y="365" width="4" height="3" fill="#001BEB"/><rect x="552" y="368" width="4" height="3" fill="#0013DD"/><rect x="552" y="371" width="4" height="3" fill="#0016E3"/><rect x="552" y="374" width="4" height="3" fill="#80FF45"/><rect x="552" y="377" width="4" height="3" fill="#2CF1EC"/><rect x="552" y="380" width="4" height="3" fill="#005EFF"/><rect x="552" y="386" width="4" height="3" fill="#004AFF"/><rect x="552" y="389" width="4" height="3" fill="#0024F9"/><rect x="552" y="392" width="4" height="3" fill="#0016E2"/><rect x="552" y="395" width="4" height="3" fill="#0070FF"/><rect x="552" y="398" width="4" height="3" fill="#0000A5"/><rect x="552" y="404" width="4" height="3" fill="#001CEC"/><rect x="556" y="368" width="4" height="3" fill="#0006C8"/><rect x="556" y="371" width="4" height="3" fill="#000097"/><rect x="556" y="374" width="4" height="3" fill="#21CEFC"/><rect x="556" y="377" width="4" height="3" fill="#36FFB9"/><rect x="556" y="380" width="4" height="3" fill="#0006C8"/><rect x="556" y="383" width="4" height="3" fill="#0C9BFF"/><rect x="556" y="386" width="4" height="3" fill="#32FFD8"/><rect x="556" y="389" width="4" height="3" fill="#0285FF"/><rect x="556" y="392" width="4" height="3" fill="#80FF45"/><rect x="556" y="395" width="4" height="3" fill="#0027FE"/><rect x="556" y="398" width="4" height="3" fill="#1EC5FF"/><rect x="556" y="401" width="4" height="3" fill="#000090"/><rect x="556" y="404" width="4" height="3" fill="#0008CB"/><rect x="556" y="407" width="4" height="3" fill="#0000B4"/><rect x="560" y="381" width="4" height="3" fill="#000090"/><rect x="560" y="384" width="4" height="3" fill="#28E5F1"/><rect x="560" y="387" width="4" height="3" fill="#0000A4"/><rect x="560" y="390" width="4" height="3" fill="#1BBEFF"/><rect x="560" y="393" width="4" height="3" fill="#13ABFF"/><rect x="560" y="396" width="4" height="3" fill="#0892FF"/><rect x="560" y="399" width="4" height="3" fill="#0A98FF"/><rect x="560" y="402" width="4" height="3" fill="#21CEFC"/><rect x="560" y="405" width="4" height="3" fill="#0045FF"/><rect x="560" y="408" width="4" height="3" fill="#001BEA"/><rect x="560" y="411" width="4" height="3" fill="#000090"/><rect x="564" y="380" width="4" height="3" fill="#000090"/><rect x="564" y="383" width="4" height="3" fill="#0033FF"/><rect x="564" y="386" width="4" height="3" fill="#001FF1"/><rect x="564" y="389" width="4" height="3" fill="#0046FF"/><rect x="564" y="392" width="4" height="3" fill="#0081FF"/><rect x="564" y="395" width="4" height="3" fill="#0076FF"/><rect x="564" y="398" width="4" height="3" fill="#7DFF47"/><rect x="564" y="401" width="4" height="3" fill="#0056FF"/><rect x="564" y="404" width="4" height="3" fill="#0009CD"/><rect x="564" y="407" width="4" height="3" fill="#000090"/><rect x="564" y="410" width="4" height="3" fill="#000090"/><rect x="568" y="383" width="4" height="3" fill="#001BEA"/><rect x="568" y="386" width="4" height="3" fill="#000ACF"/><rect x="568" y="389" width="4" height="3" fill="#35FFC5"/><rect x="568" y="392" width="4" height="3" fill="#0058FF"/><rect x="568" y="395" width="4" height="3" fill="#0070FF"/><rect x="568" y="398" width="4" height="3" fill="#30FFE1"/><rect x="568" y="401" width="4" height="3" fill="#0015E1"/><rect x="568" y="404" width="4" height="3" fill="#17B3FF"/><rect x="568" y="407" width="4" height="3" fill="#000090"/><rect x="568" y="410" width="4" height="3" fill="#0002C1"/><rect x="568" y="419" width="4" height="3" fill="#000090"/><rect x="572" y="379" width="4" height="3" fill="#000090"/><rect x="572" y="382" width="4" height="3" fill="#24D8F7"/><rect x="572" y="385" width="4" height="3" fill="#1EC5FF"/><rect x="572" y="388" width="4" height="3" fill="#12AAFF"/><rect x="572" y="391" width="4" height="3" fill="#004AFF"/><rect x="572" y="394" width="4" height="3" fill="#20CAFE"/><rect x="572" y="397" width="4" height="3" fill="#0078FF"/><rect x="572" y="400" width="4" height="3" fill="#0055FF"/><rect x="572" y="406" width="4" height="3" fill="#007DFF"/><rect x="572" y="409" width="4" height="3" fill="#0024F9"/><rect x="572" y="415" width="4" height="3" fill="#0005C6"/><rect x="576" y="384" width="4" height="3" fill="#0000B3"/><rect x="576" y="387" width="4" height="3" fill="#0052FF"/><rect x="576" y="390" width="4" height="3" fill="#0008CB"/><rect x="576" y="393" width="4" height="3" fill="#007EFF"/><rect x="576" y="396" width="4" height="3" fill="#3CFF95"/><rect x="576" y="399" width="4" height="3" fill="#0051FF"/><rect x="576" y="402" width="4" height="3" fill="#2CF1EC"/><rect x="576" y="405" width="4" height="3" fill="#2EF9E8"/><rect x="576" y="408" width="4" height="3" fill="#002EFF"/><rect x="576" y="411" width="4" height="3" fill="#0068FF"/><rect x="576" y="414" width="4" height="3" fill="#001AE9"/><rect x="576" y="423" width="4" height="3" fill="#000090"/><rect x="580" y="391" width="4" height="3" fill="#0000B4"/><rect x="580" y="394" width="4" height="3" fill="#0036FF"/><rect x="580" y="397" width="4" height="3" fill="#0078FF"/><rect x="580" y="400" width="4" height="3" fill="#80FF45"/><rect x="580" y="403" width="4" height="3" fill="#0018E5"/><rect x="580" y="406" width="4" height="3" fill="#35FFC1"/><rect x="580" y="409" width="4" height="3" fill="#29E7F0"/><rect x="580" y="412" width="4" height="3" fill="#0039FF"/><rect x="580" y="415" width="4" height="3" fill="#0000A3"/><rect x="584" y="393" width="4" height="3" fill="#0012DC"/><rect x="584" y="396" width="4" height="3" fill="#001FF0"/><rect x="584" y="399" width="4" height="3" fill="#001FF0"/><rect x="584" y="402" width="4" height="3" fill="#2AEAEF"/><rect x="584" y="408" width="4" height="3" fill="#15B1FF"/><rect x="584" y="411" width="4" height="3" fill="#3DFF8F"/><rect x="584" y="417" width="4" height="3" fill="#0042FF"/><rect x="588" y="390" width="4" height="3" fill="#006EFF"/><rect x="588" y="393" width="4" height="3" fill="#0039FF"/><rect x="588" y="396" width="4" height="3" fill="#0025FB"/><rect x="588" y="399" width="4" height="3" fill="#19B9FF"/><rect x="588" y="402" width="4" height="3" fill="#006BFF"/><rect x="588" y="408" width="4" height="3" fill="#21CCFC"/><rect x="588" y="411" width="4" height="3" fill="#66FF5C"/><rect x="588" y="417" width="4" height="3" fill="#3EFF87"/><rect x="588" y="420" width="4" height="3" fill="#000FD6"/><rect x="588" y="423" width="4" height="3" fill="#006DFF"/><rect x="588" y="429" width="4" height="3" fill="#000090"/><rect x="592" y="396" width="4" height="3" fill="#0017E3"/><rect x="592" y="399" width="4" height="3" fill="#75FF4E"/><rect x="592" y="405" width="4" height="3" fill="#002FFF"/><rect x="592" y="408" width="4" height="3" fill="#0489FF"/><rect x="592" y="411" width="4" height="3" fill="#50FF71"/><rect x="592" y="417" width="4" height="3" fill="#000090"/><rect x="596" y="393" width="4" height="3" fill="#000DD4"/><rect x="596" y="396" width="4" height="3" fill="#0044FF"/><rect x="596" y="402" width="4" height="3" fill="#007BFF"/><rect x="596" y="405" width="4" height="3" fill="#3FFF80"/><rect x="596" y="411" width="4" height="3" fill="#048BFF"/><rect x="596" y="414" width="4" height="3" fill="#000ED4"/><rect x="596" y="417" width="4" height="3" fill="#000FD6"/><rect x="600" y="392" width="4" height="3" fill="#004DFF"/><rect x="600" y="395" width="4" height="3" fill="#0051FF"/><rect x="600" y="398" width="4" height="3" fill="#078FFF"/><rect x="600" y="401" width="4" height="3" fill="#002DFF"/><rect x="600" y="404" width="4" height="3" fill="#17B5FF"/><rect x="600" y="407" width="4" height="3" fill="#27E1F3"/><rect x="600" y="410" width="4" height="3" fill="#004DFF"/><rect x="600" y="413" width="4" height="3" fill="#0015E1"/><rect x="600" y="419" width="4" height="3" fill="#0017E4"/><rect x="604" y="393" width="4" height="3" fill="#16B3FF"/><rect x="604" y="396" width="4" height="3" fill="#24D6F8"/><rect x="604" y="399" width="4" height="3" fill="#2BF0EC"/><rect x="604" y="402" width="4" height="3" fill="#0893FF"/><rect x="604" y="405" width="4" height="3" fill="#25DBF6"/><rect x="604" y="408" width="4" height="3" fill="#0061FF"/><rect x="604" y="411" width="4" height="3" fill="#005EFF"/><rect x="604" y="414" width="4" height="3" fill="#0000B7"/><rect x="604" y="417" width="4" height="3" fill="#0000AE"/><rect x="604" y="420" width="4" height="3" fill="#0009CD"/><rect x="608" y="398" width="4" height="3" fill="#0000BE"/><rect x="608" y="401" width="4" height="3" fill="#000BD1"/><rect x="608" y="404" width="4" height="3" fill="#0076FF"/><rect x="608" y="407" width="4" height="3" fill="#33FFCF"/><rect x="608" y="410" width="4" height="3" fill="#39FFA7"/><rect x="608" y="413" width="4" height="3" fill="#004EFF"/><rect x="608" y="416" width="4" height="3" fill="#0025FB"/><rect x="608" y="419" width="4" height="3" fill="#000090"/><rect x="612" y="398" width="4" height="3" fill="#0000AC"/><rect x="612" y="401" width="4" height="3" fill="#002DFF"/><rect x="612" y="404" width="4" height="3" fill="#005AFF"/><rect x="612" y="407" width="4" height="3" fill="#20C9FE"/><rect x="612" y="410" width="4" height="3" fill="#0081FF"/><rect x="612" y="413" width="4" height="3" fill="#2DF4EA"/><rect x="612" y="419" width="4" height="3" fill="#0072FF"/><rect x="612" y="422" width="4" height="3" fill="#0048FF"/><rect x="616" y="398" width="4" height="3" fill="#0017E4"/><rect x="616" y="401" width="4" height="3" fill="#0022F5"/><rect x="616" y="410" width="4" height="3" fill="#33FFCD"/><rect x="616" y="413" width="4" height="3" fill="#0027FD"/><rect x="616" y="419" width="4" height="3" fill="#26DEF4"/><rect x="616" y="422" width="4" height="3" fill="#22D1FA"/><rect x="616" y="425" width="4" height="3" fill="#23D5F8"/><rect x="616" y="428" width="4" height="3" fill="#007DFF"/><rect x="616" y="431" width="4" height="3" fill="#000CD1"/><rect x="616" y="434" width="4" height="3" fill="#0025FA"/><rect x="620" y="363" width="4" height="3" fill="#000FD6"/><rect x="620" y="372" width="4" height="3" fill="#0000B4"/><rect x="620" y="375" width="4" height="3" fill="#24D8F7"/><rect x="620" y="381" width="4" height="3" fill="#3FFF84"/><rect x="620" y="387" width="4" height="3" fill="#19B8FF"/><rect x="620" y="393" width="4" height="3" fill="#068EFF"/><rect x="620" y="396" width="4" height="3" fill="#36FFBE"/><rect x="620" y="399" width="4" height="3" fill="#0003C4"/><rect x="620" y="402" width="4" height="3" fill="#0014DE"/><rect x="624" y="297" width="4" height="3" fill="#0054FF"/><rect x="624" y="303" width="4" height="3" fill="#0025FA"/><rect x="624" y="306" width="4" height="3" fill="#0031FF"/><rect x="624" y="309" width="4" height="3" fill="#000090"/><rect x="624" y="312" width="4" height="3" fill="#0019E7"/><rect x="624" y="318" width="4" height="3" fill="#0007C9"/><rect x="624" y="324" width="4" height="3" fill="#0000AB"/><rect x="624" y="327" width="4" height="3" fill="#001EEF"/><rect x="624" y="336" width="4" height="3" fill="#0026FD"/><rect x="624" y="342" width="4" height="3" fill="#0029FF"/><rect x="624" y="345" width="4" height="3" fill="#0024F8"/><rect x="624" y="351" width="4" height="3" fill="#0011DB"/><rect x="624" y="357" width="4" height="3" fill="#001CEB"/><rect x="624" y="360" width="4" height="3" fill="#3BFF9B"/><rect x="624" y="363" width="4" height="3" fill="#0A98FF"/><rect x="624" y="369" width="4" height="3" fill="#0000B3"/><rect x="624" y="372" width="4" height="3" fill="#007CFF"/><rect x="624" y="378" width="4" height="3" fill="#0000B7"/><rect x="624" y="384" width="4" height="3" fill="#000090"/><rect x="624" y="387" width="4" height="3" fill="#000090"/><rect x="628" y="313" width="4" height="3" fill="#0000B1"/><rect x="628" y="316" width="4" height="3" fill="#0014DF"/><rect x="628" y="322" width="4" height="3" fill="#000090"/><rect x="628" y="331" width="4" height="3" fill="#007BFF"/><rect x="628" y="337" width="4" height="3" fill="#0040FF"/><rect x="628" y="343" width="4" height="3" fill="#000CD2"/><rect x="628" y="346" width="4" height="3" fill="#000090"/><rect x="628" y="352" width="4" height="3" fill="#0022F6"/><rect x="628" y="355" width="4" height="3" fill="#0064FF"/><rect x="628" y="361" width="4" height="3" fill="#004BFF"/><rect x="628" y="364" width="4" height="3" fill="#0000A9"/><rect x="628" y="370" width="4" height="3" fill="#0071FF"/><rect x="628" y="373" width="4" height="3" fill="#007EFF"/><rect x="628" y="376" width="4" height="3" fill="#0023F7"/><rect x="628" y="385" width="4" height="3" fill="#000090"/><rect x="628" y="388" width="4" height="3" fill="#000090"/><rect x="632" y="329" width="4" height="3" fill="#0007CA"/><rect x="632" y="332" width="4" height="3" fill="#000090"/><rect x="632" y="335" width="4" height="3" fill="#006BFF"/><rect x="632" y="344" width="4" height="3" fill="#0009CC"/><rect x="632" y="353" width="4" height="3" fill="#0022F6"/><rect x="632" y="356" width="4" height="3" fill="#0079FF"/><rect x="632" y="365" width="4" height="3" fill="#1EC4FF"/><rect x="632" y="371" width="4" height="3" fill="#29E7F0"/><rect x="632" y="374" width="4" height="3" fill="#17B4FF"/><rect x="632" y="377" width="4" height="3" fill="#21CCFC"/><rect x="632" y="380" width="4" height="3" fill="#0000A1"/><rect x="632" y="386" width="4" height="3" fill="#26DDF5"/><rect x="632" y="389" width="4" height="3" fill="#0043FF"/><rect x="632" y="392" width="4" height="3" fill="#0000BE"/><rect x="632" y="398" width="4" height="3" fill="#000090"/><rect x="636" y="336" width="4" height="3" fill="#003AFF"/><rect x="636" y="339" width="4" height="3" fill="#0035FF"/><rect x="636" y="345" width="4" height="3" fill="#0000A8"/><rect x="636" y="351" width="4" height="3" fill="#006FFF"/><rect x="636" y="354" width="4" height="3" fill="#14AEFF"/><rect x="636" y="357" width="4" height="3" fill="#000BD0"/><rect x="636" y="360" width="4" height="3" fill="#0000B1"/><rect x="636" y="363" width="4" height="3" fill="#23D2FA"/><rect x="636" y="366" width="4" height="3" fill="#0038FF"/><rect x="636" y="369" width="4" height="3" fill="#007EFF"/><rect x="636" y="372" width="4" height="3" fill="#3FFF84"/><rect x="636" y="378" width="4" height="3" fill="#0007C9"/><rect x="636" y="381" width="4" height="3" fill="#32FFD5"/><rect x="636" y="384" width="4" height="3" fill="#0A96FF"/><rect x="636" y="387" width="4" height="3" fill="#0027FE"/><rect x="640" y="345" width="4" height="3" fill="#0000A0"/><rect x="640" y="348" width="4" height="3" fill="#000090"/><rect x="640" y="357" width="4" height="3" fill="#00009A"/><rect x="640" y="360" width="4" height="3" fill="#19B9FF"/><rect x="640" y="363" width="4" height="3" fill="#17B5FF"/><rect x="640" y="366" width="4" height="3" fill="#0020F3"/><rect x="640" y="369" width="4" height="3" fill="#17B5FF"/><rect x="640" y="372" width="4" height="3" fill="#0078FF"/><rect x="640" y="375" width="4" height="3" fill="#0031FF"/><rect x="640" y="381" width="4" height="3" fill="#17B5FF"/><rect x="640" y="384" width="4" height="3" fill="#0009CD"/><rect x="640" y="387" width="4" height="3" fill="#006CFF"/><rect x="640" y="390" width="4" height="3" fill="#0022F6"/><rect x="640" y="393" width="4" height="3" fill="#000090"/><rect x="644" y="365" width="4" height="3" fill="#003CFF"/><rect x="644" y="371" width="4" height="3" fill="#0000B2"/><rect x="644" y="374" width="4" height="3" fill="#003BFF"/><rect x="644" y="377" width="4" height="3" fill="#0017E4"/><rect x="644" y="380" width="4" height="3" fill="#001EF0"/><rect x="644" y="383" width="4" height="3" fill="#0055FF"/><rect x="644" y="386" width="4" height="3" fill="#28E4F2"/><rect x="644" y="389" width="4" height="3" fill="#33FFD2"/><rect x="644" y="395" width="4" height="3" fill="#0029FF"/><rect x="644" y="398" width="4" height="3" fill="#21CEFC"/><rect x="644" y="401" width="4" height="3" fill="#001CEC"/><rect x="644" y="404" width="4" height="3" fill="#000BD0"/><rect x="644" y="407" width="4" height="3" fill="#000090"/><rect x="648" y="382" width="4" height="3" fill="#0014DF"/><rect x="648" y="385" width="4" height="3" fill="#0033FF"/><rect x="648" y="388" width="4" height="3" fill="#005EFF"/><rect x="648" y="391" width="4" height="3" fill="#0025FA"/><rect x="648" y="394" width="4" height="3" fill="#31FFDE"/><rect x="648" y="397" width="4" height="3" fill="#2AEBEE"/><rect x="648" y="400" width="4" height="3" fill="#80FF45"/><rect x="648" y="403" width="4" height="3" fill="#80FF45"/><rect x="648" y="406" width="4" height="3" fill="#31FFDA"/><rect x="648" y="409" width="4" height="3" fill="#13ABFF"/><rect x="648" y="412" width="4" height="3" fill="#10A5FF"/><rect x="648" y="415" width="4" height="3" fill="#0010D8"/><rect x="648" y="418" width="4" height="3" fill="#0000BE"/><rect x="648" y="424" width="4" height="3" fill="#0072FF"/><rect x="652" y="380" width="4" height="3" fill="#000090"/><rect x="652" y="383" width="4" height="3" fill="#0A97FF"/><rect x="652" y="386" width="4" height="3" fill="#22D1FA"/><rect x="652" y="389" width="4" height="3" fill="#0052FF"/><rect x="652" y="392" width="4" height="3" fill="#28E5F1"/><rect x="652" y="395" width="4" height="3" fill="#23D3F9"/><rect x="652" y="398" width="4" height="3" fill="#3BFF9F"/><rect x="652" y="401" width="4" height="3" fill="#10A5FF"/><rect x="652" y="404" width="4" height="3" fill="#25D9F7"/><rect x="652" y="407" width="4" height="3" fill="#007DFF"/><rect x="652" y="410" width="4" height="3" fill="#1FC7FF"/></g><polyline points="136,405 140,414 145,409 151,404 157,410 162,416 167,424 171,417 175,430 180,416 184,422 186,416 191,421 196,365 201,377 205,387 210,402 212,396 219,411 222,424 226,412 230,419 235,411 240,422 245,412 250,419 255,421 260,414 266,417 274,421 277,412 281,362 286,375 290,396 296.7,388 302,398.7 304.7,414.7 307.3,410 311.3,412 315.3,408 322,416 330,414.7 331.3,432.7 334,416.7 340.7,418.7 346,417.3 352.7,420 356.7,426 360,425.3 362.7,413.3 364.7,377.3 370,358 372,380 376,390 380,387 384,396 389,415 394,404 397,409 402,405 406,414 411,404 415,415 420,407 425,414 430,410 435,419 440,420 444,427 447,370 450,345 452,362 455,377 460,387 467,395 472,415 477,407 482,415 489,410 495,415 500,410 505,426 509,415 514,420 519,415 525,419 531,429 535,381 539,359 544,383 549,395 552,405 555,399 560,411 564,407 568,415 572,409 578,417 584,415 590,427 595,416 600,419 604,415 611,421 618,431 622,405 628,371 632,397 638,391 644,395 649,423 654,417" fill="none" stroke="#FFB0B0" stroke-width="1.8" stroke-linejoin="round"/><polyline points="136,351 139,380 141,382 146,371 150,375 155,377 162,382 167,386 174,394 177,387 180,391 184,390 191,399 194,355 196,285 197.5,269 200,270 201,300 205,310 206,330 210,332 216,355 219,375 222,385 227,379 231,377 235,382 240,380 244,386 247,385 252,391 260,386 265,391 272,399 275,375 280,277 282,276 286,305 291,330 295,340 301,360 304,365 304.7,392 307.3,384.7 313.3,372.7 323.3,386.7 330,388 332.7,396 340.7,390.7 348.7,393.3 355.3,394.7 358,404 360.7,404.7 362.7,360 365,285 367.5,279 370,285 374,317 377,340 381,335 386,347 389,372 391,390 397,370 402,377 407,387 412,385 417,392 425,387 432,387 440,397 444,399 446,342 449,275 451,272 455,305 459,327 462,347 466,352 471,370 475,385 479,379 485,382 495,385 500,392 506,394 512,392 518,396 523,396 526,399 531,407 533,373 535,315 537,279 539,271 541,279 544,309 547,341 550,343 553,351 557,365 559,367 563,387 566,381 570,381 574,377 579,387 584,391 590,391 594,397 600,393 606,394 612,397 617,403 620,391 622,355 622,325 624,285 627,283 629,289 630,311 634,327 637,337 641,337 644,347 647,367 648,389 652,377 654,375" fill="none" stroke="#FF2020" stroke-width="2.0" stroke-linejoin="round"/><rect x="135" y="439" width="519" height="1" fill="#E0E0FF"/><rect x="135" y="440" width="519" height="2" fill="#0808F0"/><rect x="238" y="431" width="1.5" height="17" fill="#FFFFFF"/><rect x="342" y="431" width="1.5" height="17" fill="#FFFFFF"/><rect x="446" y="431" width="1.5" height="17" fill="#FFFFFF"/><rect x="550" y="431" width="1.5" height="17" fill="#FFFFFF"/><path d="M186.3 441 L187.1 470.6 L188.0 471.6 L188.9 470.6 L190.9 441 Z M239.2 441 L238.9 476.3 L239.8 477.3 L240.7 476.3 L243.8 441 Z M248.2 441 L249.1 476.3 L250.0 477.3 L250.9 476.3 L252.8 441 Z M258.9 441 L260.3 477.4 L261.2 478.4 L262.1 477.4 L263.5 441 Z M304.0 441 L304.1 469.5 L305.0 470.5 L305.9 469.5 L308.5 441 Z M324.2 441 L324.5 477.4 L325.4 478.4 L326.3 477.4 L328.8 441 Z M388.5 441 L389.4 468.4 L390.3 469.4 L391.2 468.4 L393.1 441 Z M409.4 441 L410.3 486.4 L411.2 487.4 L412.1 486.4 L414.0 441 Z M418.7 441 L420.9 477.4 L421.8 478.4 L422.7 477.4 L423.3 441 Z M471.7 441 L472.7 469.5 L473.6 470.5 L474.5 469.5 L476.3 441 Z M499.2 441 L500.9 482 L501.8 483 L502.7 482 L503.8 441 Z M505.7 441 L506.5 476.3 L507.4 477.3 L508.3 476.3 L510.3 441 Z M511.9 441 L512.1 471.8 L513.0 472.8 L513.9 471.8 L516.5 441 Z M524.7 441 L525.6 471.8 L526.5 472.8 L527.4 471.8 L529.3 441 Z M560.2 441 L561.6 470.3 L562.5 471.3 L563.4 470.3 L564.8 441 Z M595.5 441 L595.6 475 L596.5 476 L597.4 475 L600.0 441 Z M604.7 441 L606.1 476 L607.0 477 L607.9 476 L609.3 441 Z M612.7 441 L613.6 463.8 L614.5 464.8 L615.4 463.8 L617.3 441 Z M267 441 L267.5 470.5 L274 470.5 L276.5 441 Z" fill="#0A0A70" stroke="#1A2CFF" stroke-width="1.3" stroke-linejoin="round"/><path d="M534 441 L537 444 L540 441 M622.7 441 L625.5 444 L628.4 441" fill="none" stroke="#1A2CFF" stroke-width="2"/></g><text x="10.00" y="21.80" font-family="Liberation Serif" font-size="18.00" font-weight="bold" fill="#000" stroke="#000" stroke-width="0.4" textLength="188.00" lengthAdjust="spacingAndGlyphs">Waveform Information</text><text x="210.20" y="23.80" font-family="Liberation Serif" font-size="18.00" font-weight="bold" fill="#000" stroke="#000" stroke-width="0.4" textLength="64.80" lengthAdjust="spacingAndGlyphs">Settings</text><text x="708.20" y="20.80" font-family="Liberation Serif" font-size="17.77" font-weight="bold" fill="#000" stroke="#000" stroke-width="0.4" textLength="57.80" lengthAdjust="spacingAndGlyphs">System</text><text x="10.00" y="53.80" font-family="Liberation Serif" font-size="17.32" font-weight="bold" fill="#000" stroke="#000" stroke-width="0.4" textLength="131.80" lengthAdjust="spacingAndGlyphs">Frequency(kHz)</text><text x="331.00" y="53.80" font-family="Liberation Serif" font-size="17.46" font-weight="bold" fill="#000" stroke="#000" stroke-width="0.4" textLength="107.80" lengthAdjust="spacingAndGlyphs">Flow(ml/min)</text><text x="516.00" y="53.80" font-family="Liberation Serif" font-size="17.92" font-weight="bold" fill="#000" stroke="#000" stroke-width="0.4" textLength="95.00" lengthAdjust="spacingAndGlyphs">Parameters</text><text x="12.20" y="81.80" font-family="Liberation Serif" font-size="24.20" font-weight="normal" fill="#000" stroke="#000" stroke-width="0.45" textLength="63.40" lengthAdjust="spacingAndGlyphs">MAX:</text><text x="115.20" y="81.80" font-family="Liberation Serif" font-size="24.20" font-weight="normal" fill="#000" stroke="#000" stroke-width="0.45" textLength="30.60" lengthAdjust="spacingAndGlyphs">3.2</text><text x="19.20" y="106.80" font-family="Liberation Serif" font-size="24.20" font-weight="normal" fill="#000" stroke="#000" stroke-width="0.45" textLength="56.40" lengthAdjust="spacingAndGlyphs">MIN:</text><text x="116.20" y="106.80" font-family="Liberation Serif" font-size="24.20" font-weight="normal" fill="#000" stroke="#000" stroke-width="0.45" textLength="30.60" lengthAdjust="spacingAndGlyphs">0.7</text><text x="162.20" y="81.80" font-family="Liberation Serif" font-size="24.20" font-weight="normal" fill="#000" stroke="#000" stroke-width="0.45" textLength="80.40" lengthAdjust="spacingAndGlyphs">MEAN:</text><text x="282.40" y="81.80" font-family="Liberation Serif" font-size="24.20" font-weight="normal" fill="#000" stroke="#000" stroke-width="0.45" textLength="30.60" lengthAdjust="spacingAndGlyphs">1.4</text><text x="218.20" y="106.80" font-family="Liberation Serif" font-size="24.20" font-weight="normal" fill="#000" stroke="#000" stroke-width="0.45" textLength="24.40" lengthAdjust="spacingAndGlyphs">D:</text><text x="283.20" y="106.80" font-family="Liberation Serif" font-size="24.20" font-weight="normal" fill="#000" stroke="#000" stroke-width="0.45" textLength="30.60" lengthAdjust="spacingAndGlyphs">0.7</text><text x="350.20" y="81.80" font-family="Liberation Serif" font-size="24.20" font-weight="normal" fill="#000" stroke="#000" stroke-width="0.45" textLength="63.40" lengthAdjust="spacingAndGlyphs">MAX:</text><text x="458.20" y="81.80" font-family="Liberation Serif" font-size="24.20" font-weight="normal" fill="#000" stroke="#000" stroke-width="0.45" textLength="30.60" lengthAdjust="spacingAndGlyphs">0.0</text><text x="333.20" y="106.80" font-family="Liberation Serif" font-size="24.20" font-weight="normal" fill="#000" stroke="#000" stroke-width="0.45" textLength="80.40" lengthAdjust="spacingAndGlyphs">MEAN:</text><text x="458.20" y="106.80" font-family="Liberation Serif" font-size="24.20" font-weight="normal" fill="#000" stroke="#000" stroke-width="0.45" textLength="30.60" lengthAdjust="spacingAndGlyphs">0.0</text><text x="519.40" y="81.80" font-family="Liberation Serif" font-size="24.20" font-weight="normal" fill="#000" stroke="#000" stroke-width="0.45" textLength="39.20" lengthAdjust="spacingAndGlyphs">SD:</text><text x="569.00" y="81.80" font-family="Liberation Serif" font-size="24.20" font-weight="normal" fill="#000" stroke="#000" stroke-width="0.45" textLength="40.80" lengthAdjust="spacingAndGlyphs">4.58</text><text x="519.20" y="106.80" font-family="Liberation Serif" font-size="24.20" font-weight="normal" fill="#000" stroke="#000" stroke-width="0.45" textLength="39.40" lengthAdjust="spacingAndGlyphs">RP:</text><text x="568.20" y="106.80" font-family="Liberation Serif" font-size="24.20" font-weight="normal" fill="#000" stroke="#000" stroke-width="0.45" textLength="41.60" lengthAdjust="spacingAndGlyphs">0.78</text><text x="652.20" y="81.80" font-family="Liberation Serif" font-size="24.20" font-weight="normal" fill="#000" stroke="#000" stroke-width="0.45" textLength="32.20" lengthAdjust="spacingAndGlyphs">PI:</text><text x="692.40" y="81.80" font-family="Liberation Serif" font-size="24.20" font-weight="normal" fill="#000" stroke="#000" stroke-width="0.45" textLength="42.20" lengthAdjust="spacingAndGlyphs">1.81</text><text x="640.20" y="106.80" font-family="Liberation Serif" font-size="24.20" font-weight="normal" fill="#000" stroke="#000" stroke-width="0.45" textLength="43.40" lengthAdjust="spacingAndGlyphs">HR:</text><text x="692.40" y="106.80" font-family="Liberation Serif" font-size="24.20" font-weight="normal" fill="#000" stroke="#000" stroke-width="0.45" textLength="86.40" lengthAdjust="spacingAndGlyphs">73 BPM</text><text x="30.40" y="195.80" font-family="Liberation Sans" font-size="30.29" font-weight="normal" fill="#22EE22" stroke="#22EE22" stroke-width="0.55" textLength="78.40" lengthAdjust="spacingAndGlyphs">Freeze</text><text x="110.00" y="238.80" font-family="Liberation Sans" font-size="17.79" font-weight="normal" fill="#FFF" stroke="#FFF" stroke-width="0.55" textLength="9.00" lengthAdjust="spacingAndGlyphs">4</text><text x="110.20" y="342.80" font-family="Liberation Sans" font-size="17.79" font-weight="normal" fill="#FFF" stroke="#FFF" stroke-width="0.55" textLength="10.60" lengthAdjust="spacingAndGlyphs">2</text><text x="109.20" y="445.80" font-family="Liberation Sans" font-size="16.00" font-weight="normal" fill="#FFF" stroke="#FFF" stroke-width="0.55" textLength="10.60" lengthAdjust="spacingAndGlyphs">0</text><text x="50.40" y="494.80" font-family="Liberation Sans" font-size="27.00" font-weight="normal" fill="#40F0F0" stroke="#40F0F0" stroke-width="0.55" textLength="40.40" lengthAdjust="spacingAndGlyphs">kHz</text><text x="50.40" y="533.80" font-family="Liberation Sans" font-size="23.49" font-weight="normal" fill="#FFF" stroke="#FFF" stroke-width="0.55" textLength="74.60" lengthAdjust="spacingAndGlyphs">1sec/div</text><text x="687.00" y="264.80" font-family="Liberation Serif" font-size="17.10" font-weight="bold" fill="#000" stroke="#000" stroke-width="0.4" textLength="62.00" lengthAdjust="spacingAndGlyphs">Volume</text><text x="685.00" y="506.80" font-family="Liberation Serif" font-size="16.01" font-weight="bold" fill="#000" stroke="#000" stroke-width="0.4" textLength="63.00" lengthAdjust="spacingAndGlyphs">Diameter</text><text x="706.60" y="540.80" font-family="Liberation Serif" font-size="28.99" font-weight="bold" fill="#000" stroke="#000" stroke-width="0.4" textLength="53.20" lengthAdjust="spacingAndGlyphs">14.3</text><text x="766.00" y="540.80" font-family="Liberation Serif" font-size="16.50" font-weight="bold" fill="#000" stroke="#000" stroke-width="0.4" textLength="25.00" lengthAdjust="spacingAndGlyphs">mm</text><text x="684.00" y="584.80" font-family="Liberation Serif" font-size="28.94" font-weight="bold" fill="#800000" stroke="#800000" stroke-width="0.4" textLength="40.60" lengthAdjust="spacingAndGlyphs">NC</text><text x="74.20" y="585.80" font-family="Liberation Serif" font-size="27.00" font-weight="bold" fill="#108010" stroke="#108010" stroke-width="0.4" textLength="70.60" lengthAdjust="spacingAndGlyphs">8MHz</text></svg></body></html>
